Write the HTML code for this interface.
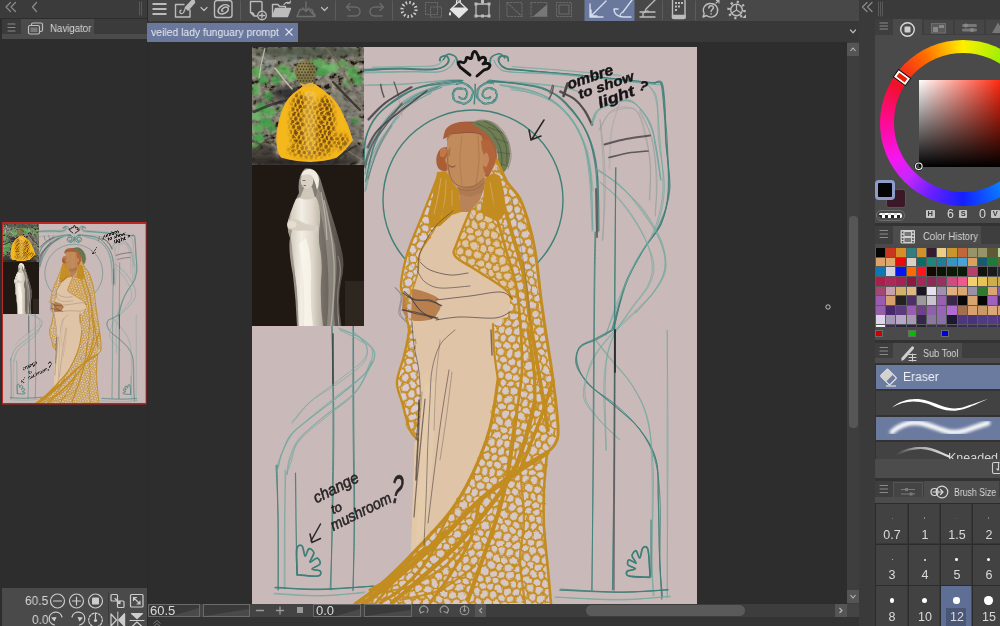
<!DOCTYPE html>
<html><head><meta charset="utf-8">
<style>
*{box-sizing:border-box;margin:0;padding:0}
html,body{width:1000px;height:626px;overflow:hidden;background:#2d2d2d;font-family:"Liberation Sans",sans-serif;color:#ddd}
.a{position:absolute}
svg{position:absolute;left:0;top:0;overflow:hidden}
.t{position:absolute;white-space:nowrap;color:#d6d6d6;transform-origin:0 50%;will-change:transform}
</style></head><body>
<!-- ===== base regions ===== -->
<div class="a" style="left:0;top:0;width:147px;height:626px;background:#2d2d2d"></div>
<div class="a" style="left:0;top:0;width:147px;height:18px;background:#3b3b3b"></div>
<div class="a" style="left:2px;top:19px;width:145px;height:20px;background:#3b3b3b"></div>
<div class="a" style="left:21px;top:19px;width:73px;height:16px;background:#4b4b4b"></div>
<div class="a" style="left:2px;top:34px;width:145px;height:5px;background:#4b4b4b"></div>
<div class="t" style="left:49.5px;top:22px;font-size:10.5px;line-height:13px;transform:scaleX(.92)">Navigator</div>
<div class="a" style="left:147px;top:0;width:1px;height:626px;background:#2a2a2a"></div>
<!-- left bottom controls -->
<div class="a" style="left:2px;top:588px;width:145px;height:38px;background:#4a4a4a"></div>
<div class="t" style="left:25px;top:594px;font-size:12.5px;line-height:15px;transform:scaleX(.95)">60.5</div>
<div class="t" style="left:32px;top:613px;font-size:12.5px;line-height:15px;transform:scaleX(.95)">0.0</div>

<!-- ===== top toolbar ===== -->
<div class="a" style="left:148px;top:0;width:711px;height:21px;background:#484848"></div>
<div class="a" style="left:148px;top:21px;width:711px;height:21px;background:#383838"></div>
<div class="a" style="left:147px;top:23px;width:151px;height:19px;background:#69789c"></div>
<div class="t" style="left:151px;top:26px;font-size:11.5px;line-height:13px;color:#e8ebf2;transform:scaleX(.905)">veiled lady funguary prompt</div>

<!-- ===== canvas art ===== -->
<svg width="1000" height="626" viewBox="0 0 1000 626" style="will-change:transform">
<defs><clipPath id="cv"><rect x="252" y="47" width="445" height="557"/></clipPath></defs>
<g id="art" clip-path="url(#cv)">
<rect x="252" y="47" width="445" height="557" fill="#c9b9b8"/>
<g fill="none" stroke-linecap="round" stroke-linejoin="round">
<path d="M364.0 70.0C370.0 69.8 389.3 69.0 400.0 69.0C410.7 69.0 421.2 70.2 428.0 70.0C434.8 69.8 437.5 69.3 441.0 68.0C444.5 66.7 448.0 64.0 449.0 62.0C450.0 60.0 448.3 56.8 447.0 56.0C445.7 55.2 442.2 56.2 441.0 57.0C439.8 57.8 440.2 60.3 440.0 61.0" stroke="#3d7f78" stroke-width="1.1" opacity="0.9" /><path d="M363.6 69.3C369.8 69.1 389.6 68.1 400.3 68.1C411.0 68.2 421.4 69.8 428.1 69.7C434.7 69.7 436.8 69.3 440.1 68.0C443.4 66.7 447.1 64.0 448.1 61.9C449.1 59.7 447.3 55.9 446.1 55.2C444.9 54.5 442.0 56.8 440.8 57.7C439.7 58.5 439.5 60.0 439.2 60.4" stroke="#3d7f78" stroke-width="1.1" opacity="0.9" /><path d="M364.3 70.9C370.2 70.5 389.4 69.1 400.2 68.8C410.9 68.5 422.0 69.3 429.0 69.1C435.9 68.9 438.5 68.9 441.7 67.6C444.9 66.3 447.5 63.1 448.3 61.2C449.1 59.4 447.9 57.3 446.6 56.6C445.3 56.0 441.4 56.5 440.4 57.2C439.3 57.8 440.3 60.1 440.3 60.7" stroke="#3d7f78" stroke-width="1.1" opacity="0.9" />
<path d="M364.0 73.0C371.7 72.8 397.7 72.2 410.0 72.0C422.3 71.8 431.3 72.8 438.0 72.0C444.7 71.2 447.2 69.0 450.0 67.0C452.8 65.0 454.2 61.2 455.0 60.0" stroke="#6fa8a0" stroke-width="1" opacity="0.8" /><path d="M364.1 72.1C371.6 72.0 396.7 71.5 409.1 71.4C421.5 71.4 431.6 72.6 438.4 71.9C445.1 71.1 446.9 69.2 449.6 67.2C452.4 65.1 454.0 60.9 454.9 59.6" stroke="#6fa8a0" stroke-width="1" opacity="0.8" />
<path d="M372.0 67.0C378.3 66.9 399.3 66.8 410.0 66.5C420.7 66.2 430.3 66.4 436.0 65.0C441.7 63.6 442.7 59.2 444.0 58.0" stroke="#6fa8a0" stroke-width="0.9" opacity="0.6" /><path d="M372.6 67.4C378.7 67.3 398.9 66.9 409.5 66.6C420.1 66.4 430.2 67.3 436.1 65.8C441.9 64.2 443.1 58.9 444.5 57.6" stroke="#6fa8a0" stroke-width="0.9" opacity="0.6" />
<path d="M443.0 60.0C443.8 59.0 445.8 54.5 448.0 54.0C450.2 53.5 454.3 55.3 456.0 57.0C457.7 58.7 457.7 62.8 458.0 64.0" stroke="#3d7f78" stroke-width="1.2" opacity="0.85" /><path d="M443.8 59.4C444.5 58.6 445.9 54.8 447.9 54.4C449.8 54.0 453.9 55.3 455.4 57.0C457.0 58.6 457.0 63.1 457.3 64.3" stroke="#3d7f78" stroke-width="1.2" opacity="0.85" />
<path d="M508.0 61.0C507.8 60.3 508.2 57.8 507.0 57.0C505.8 56.2 502.3 55.2 501.0 56.0C499.7 56.8 498.2 60.0 499.0 62.0C499.8 64.0 502.5 66.7 506.0 68.0C509.5 69.3 507.7 68.8 520.0 70.0C532.3 71.2 557.5 72.8 580.0 75.0C602.5 77.2 642.5 81.7 655.0 83.0" stroke="#3d7f78" stroke-width="1.1" opacity="0.9" /><path d="M508.5 61.1C508.4 60.4 508.9 57.5 507.8 56.6C506.6 55.8 502.8 55.3 501.4 56.2C500.0 57.1 498.3 59.8 499.2 61.9C500.0 64.0 503.2 67.5 506.7 68.9C510.1 70.3 507.9 69.2 519.9 70.3C532.0 71.4 556.6 73.1 579.1 75.4C601.7 77.7 642.6 82.6 655.3 84.0" stroke="#3d7f78" stroke-width="1.1" opacity="0.9" /><path d="M508.6 60.6C508.3 60.0 508.2 58.1 506.8 57.3C505.3 56.6 501.5 55.3 500.0 55.9C498.6 56.6 497.5 59.1 498.3 61.2C499.2 63.3 501.6 67.2 505.1 68.5C508.6 69.9 506.8 68.3 519.3 69.5C531.7 70.7 557.3 73.5 579.8 75.7C602.3 78.0 641.8 81.7 654.2 82.9" stroke="#3d7f78" stroke-width="1.1" opacity="0.9" />
<path d="M494.0 60.0C494.7 61.2 495.3 65.0 498.0 67.0C500.7 69.0 499.7 70.8 510.0 72.0C520.3 73.2 538.3 72.2 560.0 74.0C581.7 75.8 623.3 81.2 640.0 83.0C656.7 84.8 656.7 84.7 660.0 85.0" stroke="#6fa8a0" stroke-width="1" opacity="0.8" /><path d="M494.1 60.8C494.9 61.9 496.1 65.9 498.6 67.7C501.2 69.6 499.4 70.7 509.6 71.8C519.7 73.0 537.8 73.0 559.7 74.8C581.6 76.5 624.3 80.7 640.9 82.3C657.5 83.9 656.3 84.1 659.4 84.5" stroke="#6fa8a0" stroke-width="1" opacity="0.8" />
<path d="M505.0 58.0C504.2 57.3 502.2 54.2 500.0 54.0C497.8 53.8 493.7 55.3 492.0 57.0C490.3 58.7 490.3 62.8 490.0 64.0" stroke="#3d7f78" stroke-width="1.2" opacity="0.85" /><path d="M504.6 58.0C503.8 57.3 502.4 53.8 500.1 53.6C497.9 53.4 492.9 55.1 491.2 56.9C489.5 58.6 490.0 62.9 489.8 64.1" stroke="#3d7f78" stroke-width="1.2" opacity="0.85" />
<path d="M512.0 66.5C520.0 67.1 542.0 68.4 560.0 70.0C578.0 71.6 610.0 75.0 620.0 76.0" stroke="#6fa8a0" stroke-width="0.9" opacity="0.6" /><path d="M512.9 66.9C520.8 67.4 542.1 68.9 560.0 70.2C577.9 71.6 610.3 74.3 620.4 75.1" stroke="#6fa8a0" stroke-width="0.9" opacity="0.6" />
<path d="M364.0 85.0C370.0 84.8 389.0 84.5 400.0 84.0C411.0 83.5 421.8 82.7 430.0 82.0C438.2 81.3 443.7 80.2 449.0 80.0C454.3 79.8 459.8 80.8 462.0 81.0" stroke="#6fa8a0" stroke-width="1" opacity="0.7" /><path d="M364.8 85.6C370.8 85.4 389.9 85.2 400.7 84.6C411.6 84.0 421.9 82.5 429.8 81.8C437.7 81.1 443.0 80.5 448.2 80.3C453.4 80.0 459.0 80.2 461.1 80.1" stroke="#6fa8a0" stroke-width="1" opacity="0.7" />
<path d="M488.0 81.0C493.3 81.3 508.0 82.0 520.0 83.0C532.0 84.0 550.0 85.5 560.0 87.0C570.0 88.5 576.7 91.2 580.0 92.0" stroke="#6fa8a0" stroke-width="1" opacity="0.7" /><path d="M487.4 80.3C492.8 80.6 507.7 81.1 519.7 82.1C531.6 83.1 549.1 84.7 559.0 86.3C568.9 87.9 575.8 90.8 579.2 91.7" stroke="#6fa8a0" stroke-width="1" opacity="0.7" />
<path d="M456.7 83.6C457.5 83.5 459.8 83.0 461.3 83.1C462.7 83.1 464.3 83.5 465.6 84.0C466.9 84.5 468.2 85.3 469.2 86.2C470.3 87.0 471.1 88.1 471.7 89.3C472.3 90.4 472.7 91.7 472.8 92.9C472.9 94.1 472.8 95.3 472.4 96.5C472.1 97.6 471.5 98.7 470.7 99.6C470.0 100.6 469.0 101.4 467.9 102.0C466.9 102.6 465.7 103.0 464.5 103.3C463.4 103.5 462.1 103.5 460.9 103.4C459.8 103.2 458.6 102.9 457.6 102.4C456.7 101.9 455.7 101.2 455.0 100.5C454.3 99.7 453.8 98.8 453.4 98.0C453.0 97.1 452.9 96.1 452.9 95.2C452.9 94.2 453.1 93.3 453.5 92.5C453.8 91.7 454.4 90.9 455.0 90.2C455.6 89.6 456.4 89.1 457.2 88.7C458.1 88.3 459.0 88.1 459.8 88.0C460.7 87.9 461.6 88.0 462.4 88.2C463.2 88.3 464.0 88.7 464.7 89.1C465.3 89.5 465.9 90.1 466.4 90.6C466.8 91.2 467.1 91.9 467.3 92.5C467.4 93.1 467.5 93.8 467.4 94.5C467.3 95.1 467.0 95.7 466.7 96.2C466.4 96.7 466.0 97.2 465.5 97.6C465.0 97.9 464.4 98.2 463.9 98.4C463.3 98.6 462.7 98.6 462.2 98.6C461.6 98.6 461.1 98.5 460.6 98.3C460.1 98.1 459.6 97.7 459.4 97.5" stroke="#3d7f78" stroke-width="1.3" opacity="0.95" /><path d="M455.9 84.3C456.8 84.0 459.9 82.5 461.5 82.4C463.0 82.4 463.9 83.2 465.2 83.7C466.4 84.2 467.8 84.4 469.0 85.5C470.2 86.6 471.7 88.9 472.3 90.1C473.0 91.4 472.9 91.9 472.7 92.8C472.6 93.8 472.1 94.7 471.7 95.7C471.3 96.8 470.9 98.3 470.4 99.2C469.9 100.1 469.7 100.6 468.5 101.4C467.4 102.2 464.9 103.9 463.7 104.1C462.4 104.3 462.0 103.2 461.0 102.8C460.0 102.3 458.7 101.8 457.7 101.5C456.7 101.3 455.7 101.9 455.1 101.3C454.5 100.8 454.5 99.4 454.1 98.3C453.6 97.2 452.6 95.8 452.4 94.9C452.2 94.0 452.4 93.7 452.9 93.0C453.3 92.3 454.4 91.5 455.1 90.7C455.7 89.9 456.1 88.5 456.9 88.2C457.8 87.9 459.4 88.8 460.4 88.9C461.4 89.0 462.3 88.6 463.1 88.7C463.9 88.8 464.8 89.2 465.3 89.5C465.7 89.9 465.6 90.3 465.9 90.7C466.2 91.0 466.9 91.1 467.0 91.7C467.1 92.2 466.6 93.2 466.5 94.1C466.4 94.9 466.3 96.0 466.3 96.6C466.3 97.1 466.6 97.0 466.3 97.5C466.0 97.9 465.2 99.1 464.7 99.3C464.1 99.4 463.8 98.6 463.0 98.4C462.2 98.1 460.8 98.0 460.1 97.8C459.4 97.6 459.0 97.1 458.8 97.0" stroke="#3d7f78" stroke-width="1.3" opacity="0.95" /><path d="M456.9 84.3C457.8 84.1 460.4 83.0 461.9 83.0C463.4 83.1 464.8 84.0 465.9 84.5C467.0 85.1 467.4 85.6 468.5 86.4C469.6 87.3 471.7 88.7 472.5 89.8C473.2 90.8 473.4 91.6 473.3 92.8C473.1 94.0 472.3 95.8 471.8 97.0C471.4 98.2 470.9 99.4 470.4 100.2C469.9 101.0 469.8 101.1 468.8 101.8C467.8 102.4 465.6 103.9 464.4 104.1C463.1 104.2 462.6 103.2 461.3 102.8C460.1 102.4 457.9 102.1 457.0 101.8C456.0 101.5 456.5 101.6 455.8 101.0C455.1 100.5 453.1 99.5 452.8 98.5C452.4 97.6 453.7 96.4 453.7 95.4C453.8 94.4 453.1 93.6 453.2 92.6C453.3 91.5 453.5 90.0 454.3 89.4C455.2 88.8 457.2 89.1 458.1 89.0C459.0 88.9 459.2 88.8 459.9 88.8C460.6 88.8 461.4 88.9 462.3 88.8C463.2 88.8 464.7 88.3 465.3 88.6C465.9 88.8 465.7 89.6 465.9 90.3C466.2 90.9 466.6 92.0 466.8 92.7C467.0 93.3 467.1 93.6 466.9 94.3C466.8 95.0 466.3 96.4 466.1 96.9C465.8 97.5 465.6 97.1 465.2 97.5C464.9 97.8 464.6 98.8 464.0 99.1C463.5 99.4 462.6 99.5 462.0 99.4C461.5 99.2 461.1 98.8 460.6 98.4C460.2 97.9 459.6 97.0 459.4 96.7" stroke="#3d7f78" stroke-width="1.3" opacity="0.95" />
<path d="M456.7 83.6C457.5 83.5 459.8 83.0 461.3 83.1C462.7 83.1 464.3 83.5 465.6 84.0C466.9 84.5 468.2 85.3 469.2 86.2C470.3 87.0 471.1 88.1 471.7 89.3C472.3 90.4 472.7 91.7 472.8 92.9C472.9 94.1 472.8 95.3 472.4 96.5C472.1 97.6 471.5 98.7 470.7 99.6C470.0 100.6 469.0 101.4 467.9 102.0C466.9 102.6 465.7 103.0 464.5 103.3C463.4 103.5 462.1 103.5 460.9 103.4C459.8 103.2 458.6 102.9 457.6 102.4C456.7 101.9 455.7 101.2 455.0 100.5C454.3 99.7 453.8 98.8 453.4 98.0C453.0 97.1 452.9 96.1 452.9 95.2C452.9 94.2 453.1 93.3 453.5 92.5C453.8 91.7 454.4 90.9 455.0 90.2C455.6 89.6 456.4 89.1 457.2 88.7C458.1 88.3 459.0 88.1 459.8 88.0C460.7 87.9 461.6 88.0 462.4 88.2C463.2 88.3 464.0 88.7 464.7 89.1C465.3 89.5 465.9 90.1 466.4 90.6C466.8 91.2 467.1 91.9 467.3 92.5C467.4 93.1 467.5 93.8 467.4 94.5C467.3 95.1 467.0 95.7 466.7 96.2C466.4 96.7 466.0 97.2 465.5 97.6C465.0 97.9 464.4 98.2 463.9 98.4C463.3 98.6 462.7 98.6 462.2 98.6C461.6 98.6 461.1 98.5 460.6 98.3C460.1 98.1 459.6 97.7 459.4 97.5" stroke="#6fa8a0" stroke-width="1" opacity="0.7" /><path d="M456.6 82.9C457.2 83.0 458.7 83.6 460.1 83.8C461.4 84.0 463.2 83.5 464.8 83.9C466.4 84.3 468.7 85.4 469.8 86.3C470.9 87.2 470.8 88.1 471.3 89.3C471.8 90.5 472.9 92.3 472.9 93.5C473.0 94.8 471.9 95.7 471.5 96.6C471.0 97.5 470.6 98.2 470.1 99.1C469.6 100.0 469.5 101.2 468.6 102.0C467.7 102.8 465.8 103.7 464.7 103.9C463.6 104.1 463.1 103.5 461.9 103.3C460.8 103.0 459.1 102.8 457.9 102.4C456.8 102.0 455.8 101.7 455.1 100.9C454.3 100.2 453.7 98.8 453.3 98.0C452.9 97.2 452.7 97.0 452.8 96.2C452.9 95.4 453.4 94.5 453.9 93.4C454.5 92.3 455.5 90.3 456.1 89.7C456.6 89.1 456.6 90.2 457.4 89.8C458.2 89.3 460.0 87.4 460.7 87.1C461.3 86.8 461.0 87.8 461.5 88.0C462.0 88.2 463.0 88.0 463.7 88.5C464.3 89.0 464.6 90.2 465.3 91.0C466.0 91.9 467.7 92.8 467.9 93.5C468.1 94.1 466.7 94.7 466.5 95.0C466.4 95.3 467.1 94.7 467.1 95.4C467.1 96.0 467.1 98.0 466.4 98.7C465.8 99.4 464.0 99.5 463.2 99.5C462.5 99.4 462.2 98.6 461.9 98.6C461.7 98.5 462.4 99.3 461.8 99.1C461.2 98.9 459.1 97.7 458.5 97.4" stroke="#6fa8a0" stroke-width="1" opacity="0.7" />
<path d="M493.3 83.6C492.5 83.5 490.2 83.0 488.7 83.1C487.3 83.1 485.7 83.5 484.4 84.0C483.1 84.5 481.8 85.3 480.8 86.2C479.7 87.0 478.9 88.1 478.3 89.3C477.7 90.4 477.3 91.7 477.2 92.9C477.1 94.1 477.2 95.3 477.6 96.5C477.9 97.6 478.5 98.7 479.3 99.6C480.0 100.6 481.0 101.4 482.1 102.0C483.1 102.6 484.3 103.0 485.5 103.3C486.6 103.5 487.9 103.5 489.1 103.4C490.2 103.2 491.4 102.9 492.4 102.4C493.3 101.9 494.3 101.2 495.0 100.5C495.7 99.7 496.2 98.8 496.6 98.0C497.0 97.1 497.1 96.1 497.1 95.2C497.1 94.2 496.9 93.3 496.5 92.5C496.2 91.7 495.6 90.9 495.0 90.2C494.4 89.6 493.6 89.1 492.8 88.7C491.9 88.3 491.0 88.1 490.2 88.0C489.3 87.9 488.4 88.0 487.6 88.2C486.8 88.3 486.0 88.7 485.3 89.1C484.7 89.5 484.1 90.1 483.6 90.6C483.2 91.2 482.9 91.9 482.7 92.5C482.6 93.1 482.5 93.8 482.6 94.5C482.7 95.1 483.0 95.7 483.3 96.2C483.6 96.7 484.0 97.2 484.5 97.6C485.0 97.9 485.6 98.2 486.1 98.4C486.7 98.6 487.3 98.6 487.8 98.6C488.4 98.6 488.9 98.5 489.4 98.3C489.9 98.1 490.4 97.7 490.6 97.5" stroke="#3d7f78" stroke-width="1.3" opacity="0.95" /><path d="M493.3 83.3C492.5 83.2 489.6 82.8 488.2 82.8C486.8 82.7 486.0 82.6 484.8 83.1C483.6 83.7 482.1 85.1 480.9 86.1C479.6 87.0 478.0 87.8 477.4 89.0C476.8 90.1 477.5 91.5 477.4 92.9C477.3 94.3 476.4 96.1 476.8 97.3C477.2 98.6 479.1 99.8 479.8 100.5C480.6 101.2 480.5 101.0 481.4 101.6C482.2 102.1 483.4 103.6 484.6 103.8C485.9 104.0 487.4 102.8 488.6 102.7C489.9 102.6 491.1 103.6 492.2 103.1C493.4 102.7 494.9 100.8 495.5 100.1C496.2 99.3 495.7 99.5 496.0 98.7C496.3 98.0 497.3 96.7 497.3 95.5C497.2 94.3 496.1 92.6 495.8 91.7C495.5 90.8 496.0 90.5 495.3 90.1C494.7 89.7 492.8 89.7 492.0 89.5C491.2 89.2 491.3 88.7 490.4 88.5C489.5 88.4 487.8 88.6 486.8 88.8C485.8 89.0 485.1 89.5 484.5 89.8C484.0 90.0 483.8 89.8 483.6 90.3C483.3 90.9 483.1 92.7 482.8 93.3C482.6 93.9 482.1 93.4 482.2 93.8C482.3 94.2 483.1 95.2 483.3 95.7C483.6 96.3 483.5 96.6 483.8 97.0C484.1 97.3 484.7 97.6 485.3 97.8C485.9 98.1 486.7 98.2 487.5 98.3C488.2 98.3 489.3 98.1 489.9 97.9C490.4 97.7 490.5 97.1 490.6 97.0" stroke="#3d7f78" stroke-width="1.3" opacity="0.95" /><path d="M493.0 82.8C492.2 82.7 489.7 82.0 488.3 82.2C486.9 82.4 486.2 83.4 484.8 84.1C483.5 84.7 481.2 85.4 480.2 86.1C479.2 86.9 479.5 87.5 479.1 88.6C478.7 89.7 478.0 91.3 477.8 92.7C477.5 94.2 477.3 95.9 477.6 97.1C477.8 98.2 478.3 98.7 479.1 99.6C479.9 100.6 481.4 102.1 482.4 102.9C483.4 103.6 484.0 103.7 485.2 103.9C486.4 104.0 488.3 103.9 489.4 103.6C490.6 103.3 491.4 102.8 492.2 102.1C493.0 101.5 493.6 100.4 494.2 99.8C494.8 99.2 495.4 99.3 495.8 98.4C496.3 97.5 496.7 95.4 496.7 94.6C496.7 93.7 496.0 93.8 495.8 93.1C495.6 92.4 496.2 91.4 495.7 90.5C495.1 89.7 493.3 88.7 492.4 88.2C491.4 87.8 490.7 88.0 489.8 87.9C488.9 87.9 487.8 87.7 486.9 88.1C486.1 88.4 485.3 89.5 484.9 89.9C484.5 90.4 484.9 90.2 484.5 90.7C484.1 91.3 482.6 92.8 482.3 93.3C481.9 93.9 482.3 93.8 482.3 94.2C482.3 94.6 482.0 95.4 482.4 96.0C482.7 96.6 483.9 97.2 484.5 97.6C485.0 98.0 485.2 98.3 485.6 98.4C486.0 98.5 486.4 98.2 486.9 98.2C487.4 98.1 488.2 98.4 488.7 98.1C489.1 97.9 489.6 96.9 489.8 96.7" stroke="#3d7f78" stroke-width="1.3" opacity="0.95" />
<path d="M493.3 83.6C492.5 83.5 490.2 83.0 488.7 83.1C487.3 83.1 485.7 83.5 484.4 84.0C483.1 84.5 481.8 85.3 480.8 86.2C479.7 87.0 478.9 88.1 478.3 89.3C477.7 90.4 477.3 91.7 477.2 92.9C477.1 94.1 477.2 95.3 477.6 96.5C477.9 97.6 478.5 98.7 479.3 99.6C480.0 100.6 481.0 101.4 482.1 102.0C483.1 102.6 484.3 103.0 485.5 103.3C486.6 103.5 487.9 103.5 489.1 103.4C490.2 103.2 491.4 102.9 492.4 102.4C493.3 101.9 494.3 101.2 495.0 100.5C495.7 99.7 496.2 98.8 496.6 98.0C497.0 97.1 497.1 96.1 497.1 95.2C497.1 94.2 496.9 93.3 496.5 92.5C496.2 91.7 495.6 90.9 495.0 90.2C494.4 89.6 493.6 89.1 492.8 88.7C491.9 88.3 491.0 88.1 490.2 88.0C489.3 87.9 488.4 88.0 487.6 88.2C486.8 88.3 486.0 88.7 485.3 89.1C484.7 89.5 484.1 90.1 483.6 90.6C483.2 91.2 482.9 91.9 482.7 92.5C482.6 93.1 482.5 93.8 482.6 94.5C482.7 95.1 483.0 95.7 483.3 96.2C483.6 96.7 484.0 97.2 484.5 97.6C485.0 97.9 485.6 98.2 486.1 98.4C486.7 98.6 487.3 98.6 487.8 98.6C488.4 98.6 488.9 98.5 489.4 98.3C489.9 98.1 490.4 97.7 490.6 97.5" stroke="#6fa8a0" stroke-width="1" opacity="0.7" /><path d="M492.8 83.0C492.2 83.0 490.3 82.9 489.0 83.2C487.6 83.4 486.3 83.7 485.0 84.4C483.7 85.0 482.4 86.3 481.3 87.1C480.1 87.8 478.5 88.0 478.0 88.8C477.5 89.7 478.3 90.7 478.4 92.0C478.4 93.3 478.1 95.4 478.1 96.8C478.1 98.2 477.4 99.5 478.2 100.4C479.0 101.4 481.7 101.7 483.0 102.3C484.3 102.9 485.2 103.8 486.0 104.0C486.9 104.2 487.1 103.6 488.2 103.4C489.2 103.3 491.1 103.6 492.4 103.2C493.6 102.8 495.0 102.0 495.7 101.3C496.4 100.6 496.5 99.8 496.8 98.9C497.1 98.0 497.7 96.9 497.6 95.6C497.4 94.4 496.5 92.3 495.9 91.3C495.3 90.4 494.8 90.2 494.1 89.9C493.4 89.6 492.4 89.8 491.8 89.5C491.2 89.2 491.0 88.5 490.3 88.3C489.6 88.2 488.7 88.7 487.9 88.6C487.0 88.5 485.9 87.5 485.3 87.9C484.7 88.4 484.8 90.5 484.4 91.2C483.9 92.0 483.0 92.2 482.7 92.6C482.5 93.0 482.8 92.9 483.0 93.4C483.2 93.9 483.8 95.0 483.9 95.6C483.9 96.2 483.0 96.7 483.5 97.0C484.0 97.3 485.8 97.2 486.7 97.7C487.5 98.1 487.9 99.7 488.4 99.8C488.8 99.8 489.0 98.3 489.4 98.0C489.7 97.7 490.4 98.0 490.6 98.0" stroke="#6fa8a0" stroke-width="1" opacity="0.7" />
<path d="M475.0 84.0C475.0 85.3 475.1 88.7 475.0 92.0C474.9 95.3 474.6 102.0 474.5 104.0" stroke="#3d7f78" stroke-width="1.1" opacity="0.8" /><path d="M475.4 84.2C475.3 85.4 475.4 88.2 475.2 91.4C475.0 94.7 474.2 101.6 474.0 103.7" stroke="#3d7f78" stroke-width="1.1" opacity="0.8" />
<path d="M462.0 81.0C459.8 81.2 455.7 81.0 449.0 82.0C442.3 83.0 430.2 84.7 422.0 87.0C413.8 89.3 407.5 91.2 400.0 96.0C392.5 100.8 382.7 109.0 377.0 116.0C371.3 123.0 368.2 129.5 366.0 138.0C363.8 146.5 364.3 162.2 364.0 167.0" stroke="#3d7f78" stroke-width="1.1" opacity="0.85" /><path d="M462.6 80.5C460.4 80.5 456.1 79.7 449.2 80.7C442.2 81.7 429.0 83.8 420.9 86.4C412.7 89.0 407.7 91.7 400.4 96.5C393.2 101.3 383.2 108.6 377.5 115.5C371.7 122.4 368.3 129.5 366.0 137.9C363.8 146.3 364.3 161.3 363.9 166.0" stroke="#3d7f78" stroke-width="1.1" opacity="0.85" /><path d="M463.0 80.2C460.9 80.7 457.3 82.0 450.2 83.1C443.2 84.2 429.0 84.5 420.7 86.9C412.5 89.2 408.1 92.5 400.8 97.2C393.5 102.0 382.8 108.4 376.9 115.4C370.9 122.4 367.5 130.5 365.2 139.2C363.0 147.8 363.6 162.5 363.2 167.2" stroke="#3d7f78" stroke-width="1.1" opacity="0.85" />
<path d="M455.0 84.0C450.8 84.8 438.5 86.0 430.0 89.0C421.5 92.0 412.0 96.2 404.0 102.0C396.0 107.8 387.8 116.0 382.0 124.0C376.2 132.0 371.8 141.5 369.0 150.0C366.2 158.5 365.7 170.8 365.0 175.0" stroke="#6fa8a0" stroke-width="1" opacity="0.8" /><path d="M453.9 84.1C450.2 84.7 439.5 84.9 431.4 87.9C423.2 90.9 413.0 95.9 405.0 102.0C396.9 108.1 389.3 116.4 383.2 124.6C377.0 132.8 371.2 143.0 368.2 151.2C365.2 159.4 365.5 169.8 365.0 173.6" stroke="#6fa8a0" stroke-width="1" opacity="0.8" /><path d="M453.5 84.0C449.6 84.7 438.3 85.5 429.9 88.4C421.4 91.3 411.0 95.4 402.9 101.5C394.9 107.6 387.4 116.8 381.4 125.0C375.5 133.2 370.1 142.6 367.5 150.8C364.9 158.9 366.3 170.0 366.0 173.9" stroke="#6fa8a0" stroke-width="1" opacity="0.8" />
<path d="M398.0 116.0C395.0 120.0 385.0 131.8 380.0 140.0C375.0 148.2 370.0 160.8 368.0 165.0" stroke="#6fa8a0" stroke-width="1" opacity="0.7" /><path d="M399.3 116.6C396.3 120.4 386.5 131.4 381.2 139.4C375.9 147.4 369.9 160.5 367.6 164.7" stroke="#6fa8a0" stroke-width="1" opacity="0.7" />
<path d="M411.0 87.0C406.8 89.6 393.1 97.0 386.0 102.5C378.9 108.0 371.4 117.1 368.5 120.0" stroke="#4b4649" stroke-width="1.6" opacity="0.8" /><path d="M412.0 87.2C407.6 89.7 393.0 97.0 385.7 102.4C378.4 107.7 371.0 116.3 368.1 119.1" stroke="#4b4649" stroke-width="1.6" opacity="0.8" />
<path d="M440.0 86.0C435.3 88.0 420.3 92.7 412.0 98.0C403.7 103.3 396.3 110.0 390.0 118.0C383.7 126.0 378.0 135.7 374.0 146.0C370.0 156.3 367.3 174.3 366.0 180.0" stroke="#3d7f78" stroke-width="1" opacity="0.7" /><path d="M438.2 87.5C433.7 89.5 419.3 95.0 411.1 99.9C402.8 104.8 395.1 109.5 388.9 117.0C382.7 124.4 378.0 133.8 374.0 144.6C370.1 155.5 366.9 175.8 365.4 182.0" stroke="#3d7f78" stroke-width="1" opacity="0.7" /><path d="M441.7 87.4C436.8 89.4 420.9 94.7 412.6 99.8C404.3 105.0 398.2 110.9 391.9 118.2C385.7 125.6 379.1 133.8 375.0 144.0C370.8 154.3 368.3 173.8 367.0 179.8" stroke="#3d7f78" stroke-width="1" opacity="0.7" />
<path d="M430.0 93.0C425.7 95.8 411.7 102.8 404.0 110.0C396.3 117.2 389.3 126.7 384.0 136.0C378.7 145.3 375.0 157.0 372.0 166.0C369.0 175.0 367.0 186.0 366.0 190.0" stroke="#6fa8a0" stroke-width="1" opacity="0.7" /><path d="M431.1 93.6C426.4 96.0 410.6 101.2 403.1 108.0C395.5 114.8 391.1 124.8 385.9 134.4C380.7 143.9 375.3 155.9 371.9 165.3C368.4 174.8 366.2 186.8 365.1 191.1" stroke="#6fa8a0" stroke-width="1" opacity="0.7" /><path d="M432.1 91.9C427.5 94.8 412.7 101.9 404.7 109.1C396.7 116.4 389.9 126.3 384.3 135.5C378.6 144.8 373.8 155.1 370.5 164.5C367.3 173.9 365.7 187.2 364.7 191.8" stroke="#6fa8a0" stroke-width="1" opacity="0.7" />
<path d="M402.0 104.0C399.0 107.3 389.0 117.0 384.0 124.0C379.0 131.0 375.2 138.7 372.0 146.0C368.8 153.3 366.2 164.3 365.0 168.0" stroke="#4b4649" stroke-width="1.3" opacity="0.6" /><path d="M402.0 103.0C399.2 106.8 390.5 118.8 385.5 125.8C380.4 132.7 375.4 137.9 371.8 144.7C368.2 151.5 365.2 162.9 363.9 166.5" stroke="#4b4649" stroke-width="1.3" opacity="0.6" />
<path d="M392.0 126.0C389.7 130.0 382.0 141.3 378.0 150.0C374.0 158.7 369.7 173.3 368.0 178.0" stroke="#6a6a70" stroke-width="1" opacity="0.5" /><path d="M391.5 124.8C389.1 128.9 381.1 140.2 377.2 149.3C373.3 158.3 369.7 174.2 368.2 179.2" stroke="#6a6a70" stroke-width="1" opacity="0.5" />
<path d="M426.5 91.0C421.7 94.8 405.8 106.8 397.5 113.5C389.2 120.2 381.9 125.8 377.0 131.5C372.1 137.2 369.5 145.2 368.0 148.0" stroke="#4b4649" stroke-width="1.4" opacity="0.75" /><path d="M427.1 90.8C422.1 94.6 405.7 106.8 397.3 113.6C388.9 120.3 381.8 125.5 376.7 131.1C371.6 136.8 368.6 144.7 366.9 147.5" stroke="#4b4649" stroke-width="1.4" opacity="0.75" />
<path d="M380.7 84.5C380.9 85.6 381.4 88.9 382.0 91.0C382.6 93.1 383.7 96.0 384.0 97.0" stroke="#4b4649" stroke-width="1.5" opacity="0.85" />
<path d="M394.0 82.0C394.4 83.2 395.8 86.7 396.5 89.0C397.2 91.3 398.2 94.8 398.5 96.0" stroke="#4b4649" stroke-width="1.3" opacity="0.8" />
<path d="M398.5 96.0C398.8 97.7 399.4 102.7 400.0 106.0C400.6 109.3 401.7 114.3 402.0 116.0" stroke="#8a8a8a" stroke-width="0.8" opacity="0.5" />
<path d="M488.0 81.0C493.3 81.5 510.5 82.5 520.0 84.0C529.5 85.5 537.3 86.8 545.0 90.0C552.7 93.2 559.0 95.8 566.0 103.0C573.0 110.2 582.0 121.5 587.0 133.0C592.0 144.5 594.2 155.5 596.0 172.0C597.8 188.5 597.7 222.0 598.0 232.0" stroke="#3d7f78" stroke-width="1.1" opacity="0.85" /><path d="M489.2 80.0C494.3 80.7 510.6 82.8 520.0 84.3C529.5 85.9 538.4 86.3 545.9 89.3C553.5 92.3 558.6 95.1 565.4 102.3C572.2 109.6 581.4 121.1 586.7 132.9C592.0 144.6 595.1 156.6 597.2 172.9C599.2 189.2 598.7 221.1 599.0 230.8" stroke="#3d7f78" stroke-width="1.1" opacity="0.85" /><path d="M486.8 81.5C492.5 81.9 511.3 82.7 521.0 83.9C530.8 85.1 537.8 85.3 545.2 88.7C552.7 92.1 558.6 96.6 565.7 104.1C572.8 111.6 582.6 122.7 587.8 133.9C593.1 145.1 595.7 155.1 597.2 171.3C598.8 187.5 597.0 221.1 597.0 231.1" stroke="#3d7f78" stroke-width="1.1" opacity="0.85" />
<path d="M500.0 85.0C505.8 86.2 525.0 88.5 535.0 92.0C545.0 95.5 552.5 99.2 560.0 106.0C567.5 112.8 575.0 122.3 580.0 133.0C585.0 143.7 587.8 153.8 590.0 170.0C592.2 186.2 592.5 220.0 593.0 230.0" stroke="#6fa8a0" stroke-width="1" opacity="0.75" /><path d="M500.1 85.5C506.1 86.7 526.3 89.1 536.3 92.7C546.4 96.2 553.2 100.0 560.4 106.8C567.7 113.5 575.2 122.5 579.9 133.2C584.6 143.8 586.6 154.5 588.6 170.8C590.7 187.2 591.6 221.2 592.2 231.3" stroke="#6fa8a0" stroke-width="1" opacity="0.75" /><path d="M500.4 84.4C506.0 85.6 523.9 87.6 533.9 91.3C543.9 95.0 552.9 99.9 560.4 106.6C567.9 113.3 573.9 121.1 578.8 131.7C583.8 142.3 587.8 154.0 590.1 170.2C592.4 186.5 592.2 219.4 592.7 229.2" stroke="#6fa8a0" stroke-width="1" opacity="0.75" />
<path d="M560.0 92.0C562.4 93.2 570.5 96.0 574.5 99.0C578.5 102.0 581.1 105.7 584.0 110.0C586.9 114.3 590.4 122.2 591.7 124.7" stroke="#4b4649" stroke-width="1.9" opacity="0.8" /><path d="M560.2 91.2C562.5 92.5 570.1 95.8 574.2 98.9C578.3 102.1 581.7 105.9 584.7 110.2C587.8 114.5 591.1 122.3 592.3 124.7" stroke="#4b4649" stroke-width="1.9" opacity="0.8" />
<path d="M510.0 88.0C515.8 89.7 535.0 93.0 545.0 98.0C555.0 103.0 563.2 109.3 570.0 118.0C576.8 126.7 582.3 138.0 586.0 150.0C589.7 162.0 591.0 183.3 592.0 190.0" stroke="#6fa8a0" stroke-width="1" opacity="0.6" /><path d="M508.8 86.9C515.2 88.9 537.0 94.1 547.0 98.9C557.1 103.7 562.7 107.3 569.2 115.9C575.6 124.5 582.2 138.6 586.0 150.8C589.7 162.9 590.7 182.6 591.6 188.9" stroke="#6fa8a0" stroke-width="1" opacity="0.6" /><path d="M510.7 89.9C516.2 90.9 534.0 91.3 543.8 96.0C553.6 100.6 562.1 108.9 569.3 117.7C576.5 126.4 582.8 136.4 586.8 148.7C590.8 160.9 592.2 184.0 593.3 191.1" stroke="#6fa8a0" stroke-width="1" opacity="0.6" />
<path d="M600.0 120.0C600.5 126.7 602.3 146.7 603.0 160.0C603.7 173.3 604.0 186.7 604.0 200.0C604.0 213.3 603.2 233.3 603.0 240.0" stroke="#8a9a98" stroke-width="0.9" opacity="0.55" /><path d="M600.0 119.1C600.7 125.8 603.6 146.1 604.4 159.4C605.2 172.8 605.3 185.6 605.0 199.2C604.6 212.8 602.6 233.8 602.2 240.8" stroke="#8a9a98" stroke-width="0.9" opacity="0.55" />
<path d="M640.0 110.0C642.0 115.0 649.2 128.3 652.0 140.0C654.8 151.7 656.5 167.5 657.0 180.0C657.5 192.5 655.3 209.2 655.0 215.0" stroke="#8a9a98" stroke-width="0.9" opacity="0.5" /><path d="M639.4 111.4C641.5 116.0 649.2 127.7 652.0 139.1C654.8 150.5 655.6 166.9 656.2 179.8C656.8 192.6 655.6 210.2 655.5 216.3" stroke="#8a9a98" stroke-width="0.9" opacity="0.5" />
<path d="M620.0 104.0C618.7 108.3 613.7 119.0 612.0 130.0C610.3 141.0 610.3 163.3 610.0 170.0" stroke="#9aa5a3" stroke-width="0.8" opacity="0.45" /><path d="M618.9 103.7C617.6 108.3 612.8 120.6 611.1 131.4C609.5 142.3 609.3 162.4 608.9 168.7" stroke="#9aa5a3" stroke-width="0.8" opacity="0.45" />
<path d="M553.5 86.0C553.2 87.2 552.8 90.8 552.0 93.0C551.2 95.2 549.5 98.0 549.0 99.0" stroke="#4b4649" stroke-width="1.4" opacity="0.85" />
<path d="M596.0 189.0C596.1 193.3 596.3 207.0 596.5 215.0C596.7 223.0 596.9 233.3 597.0 237.0" stroke="#4b4649" stroke-width="1.9" opacity="0.75" />
<path d="M655.0 83.0C656.0 83.2 659.5 79.5 661.0 84.0C662.5 88.5 663.2 100.7 664.0 110.0C664.8 119.3 665.2 126.8 666.0 140.0C666.8 153.2 669.8 175.0 669.0 189.0C668.2 203.0 665.3 213.8 661.0 224.0C656.7 234.2 648.8 240.0 643.0 250.0C637.2 260.0 631.0 270.7 626.0 284.0C621.0 297.3 615.2 322.3 613.0 330.0" stroke="#3d7f78" stroke-width="1.1" opacity="0.85" /><path d="M653.9 82.7C655.2 83.1 660.2 80.2 662.0 85.0C663.8 89.8 663.8 102.2 664.6 111.3C665.5 120.4 666.5 126.4 667.1 139.6C667.7 152.7 669.1 176.3 668.2 190.1C667.3 204.0 665.8 212.9 661.6 222.8C657.5 232.7 649.4 239.6 643.4 249.7C637.4 259.8 630.9 270.4 625.7 283.6C620.5 296.7 614.4 321.2 612.1 328.7" stroke="#3d7f78" stroke-width="1.1" opacity="0.85" /><path d="M654.4 82.6C655.7 82.7 660.4 78.6 662.2 83.0C664.0 87.5 664.6 99.6 665.2 109.2C665.8 118.9 664.9 127.6 665.6 140.8C666.4 154.1 670.8 175.0 669.8 188.8C668.9 202.7 664.4 213.6 659.8 223.9C655.3 234.3 648.4 241.1 642.7 251.1C636.9 261.0 630.0 270.7 625.2 283.6C620.4 296.6 615.9 321.3 614.0 328.8" stroke="#3d7f78" stroke-width="1.1" opacity="0.85" />
<path d="M648.0 84.0C649.3 86.7 654.0 90.7 656.0 100.0C658.0 109.3 658.8 125.2 660.0 140.0C661.2 154.8 663.8 174.3 663.0 189.0C662.2 203.7 659.5 215.8 655.0 228.0C650.5 240.2 642.2 250.0 636.0 262.0C629.8 274.0 623.0 287.8 618.0 300.0C613.0 312.2 608.0 329.2 606.0 335.0" stroke="#6fa8a0" stroke-width="1" opacity="0.7" /><path d="M647.7 85.0C649.2 87.3 655.1 89.6 656.9 98.5C658.7 107.5 657.3 123.7 658.5 138.6C659.8 153.5 664.8 173.1 664.3 188.2C663.9 203.3 660.6 217.1 655.8 229.3C651.0 241.5 641.5 249.4 635.5 261.3C629.4 273.1 624.5 288.0 619.5 300.4C614.4 312.8 607.6 329.8 605.2 335.7" stroke="#6fa8a0" stroke-width="1" opacity="0.7" />
<path d="M591.7 125.0C592.8 122.5 594.5 113.7 598.0 110.0C601.5 106.3 608.0 104.5 613.0 103.0C618.0 101.5 623.5 100.2 628.0 101.0C632.5 101.8 636.3 104.0 640.0 108.0C643.7 112.0 647.3 118.7 650.0 125.0C652.7 131.3 654.2 136.8 656.0 146.0C657.8 155.2 660.2 174.3 661.0 180.0" stroke="#6fa8a0" stroke-width="1" opacity="0.8" /><path d="M591.3 124.5C592.2 122.2 593.0 114.1 596.8 110.6C600.6 107.1 608.6 105.1 614.0 103.3C619.4 101.5 624.8 99.1 629.1 99.9C633.3 100.6 635.7 103.6 639.4 107.9C643.0 112.3 648.4 119.8 651.1 126.1C653.8 132.3 654.1 136.4 655.7 145.4C657.4 154.4 660.0 174.2 660.8 180.0" stroke="#6fa8a0" stroke-width="1" opacity="0.8" /><path d="M592.7 124.2C593.7 122.0 595.2 114.0 598.7 110.6C602.2 107.1 608.9 105.3 613.8 103.7C618.7 102.0 624.0 99.9 628.3 100.6C632.6 101.3 635.8 103.8 639.6 107.7C643.3 111.6 648.1 117.5 650.7 124.0C653.3 130.5 653.7 137.4 655.3 146.6C656.9 155.8 659.5 173.6 660.4 179.0" stroke="#6fa8a0" stroke-width="1" opacity="0.8" />
<path d="M600.0 130.0C601.7 127.0 605.8 115.8 610.0 112.0C614.2 108.2 620.3 106.8 625.0 107.0C629.7 107.2 634.5 108.3 638.0 113.0C641.5 117.7 644.0 126.3 646.0 135.0C648.0 143.7 649.3 154.2 650.0 165.0C650.7 175.8 650.0 194.2 650.0 200.0" stroke="#8f9a98" stroke-width="0.8" opacity="0.6" /><path d="M598.6 130.2C600.4 127.4 604.9 117.1 609.5 113.4C614.1 109.8 621.5 108.7 626.2 108.5C630.8 108.2 634.2 107.3 637.3 111.8C640.4 116.2 642.6 126.1 644.8 135.0C647.0 143.8 649.9 154.0 650.6 164.8C651.4 175.6 649.4 193.9 649.2 199.8" stroke="#8f9a98" stroke-width="0.8" opacity="0.6" />
<path d="M604.5 144.5C608.1 143.6 618.4 140.5 626.0 139.0C633.6 137.5 646.0 136.1 650.0 135.5" stroke="#4b4649" stroke-width="2" opacity="0.85" />
<path d="M609.0 157.5C612.2 156.8 621.5 154.1 628.0 153.0C634.5 151.9 644.7 151.3 648.0 151.0" stroke="#4b4649" stroke-width="1.7" opacity="0.85" />
<path d="M596.0 168.0C600.0 171.0 612.2 178.8 620.0 186.0C627.8 193.2 636.3 201.8 643.0 211.0C649.7 220.2 656.3 231.7 660.0 241.0C663.7 250.3 665.8 258.8 665.0 267.0C664.2 275.2 659.8 282.5 655.0 290.0C650.2 297.5 639.2 308.3 636.0 312.0" stroke="#6fa8a0" stroke-width="1" opacity="0.7" /><path d="M596.4 168.6C600.5 171.6 612.9 180.2 620.8 187.1C628.7 194.0 636.8 200.9 643.5 209.8C650.2 218.7 657.5 230.9 661.1 240.3C664.7 249.8 666.1 258.5 665.2 266.6C664.3 274.7 660.8 281.6 655.8 289.0C650.8 296.5 638.6 307.5 635.2 311.2" stroke="#6fa8a0" stroke-width="1" opacity="0.7" /><path d="M594.9 169.2C599.1 171.9 612.3 178.2 620.3 185.4C628.2 192.7 636.0 203.5 642.7 212.6C649.3 221.7 656.1 231.0 660.0 240.1C663.9 249.3 666.6 259.4 666.0 267.5C665.4 275.6 661.6 281.1 656.6 288.7C651.6 296.3 639.4 309.0 635.9 313.0" stroke="#6fa8a0" stroke-width="1" opacity="0.7" />
<path d="M600.0 182.0C603.7 185.3 615.0 193.7 622.0 202.0C629.0 210.3 637.0 222.0 642.0 232.0C647.0 242.0 651.0 253.2 652.0 262.0C653.0 270.8 651.7 277.0 648.0 285.0C644.3 293.0 636.0 300.8 630.0 310.0C624.0 319.2 616.3 328.3 612.0 340.0C607.7 351.7 605.0 361.7 604.0 380.0C603.0 398.3 605.7 438.3 606.0 450.0" stroke="#6fa8a0" stroke-width="1" opacity="0.65" /><path d="M601.1 183.3C604.3 186.3 613.9 193.4 620.5 201.3C627.1 209.3 635.3 220.9 640.8 231.0C646.3 241.2 652.1 253.3 653.5 262.3C654.9 271.2 653.1 276.7 649.4 284.6C645.7 292.5 637.5 300.5 631.2 309.8C624.8 319.2 615.5 329.4 611.2 340.9C606.9 352.4 606.2 360.5 605.4 378.7C604.6 397.0 606.2 438.4 606.3 450.4" stroke="#6fa8a0" stroke-width="1" opacity="0.65" />
<path d="M613.0 330.0C610.2 331.7 601.5 337.2 596.0 340.0C590.5 342.8 583.2 342.8 580.0 347.0C576.8 351.2 575.3 358.7 577.0 365.0C578.7 371.3 583.8 378.3 590.0 385.0C596.2 391.7 605.7 397.5 614.0 405.0C622.3 412.5 633.2 420.8 640.0 430.0C646.8 439.2 651.7 448.3 655.0 460.0C658.3 471.7 659.2 483.3 660.0 500.0C660.8 516.7 659.7 543.7 660.0 560.0C660.3 576.3 661.7 591.7 662.0 598.0" stroke="#3d7f78" stroke-width="1" opacity="0.8" /><path d="M612.0 329.5C609.1 331.1 600.2 336.0 594.7 338.9C589.2 341.9 582.0 343.2 579.1 347.4C576.3 351.5 576.0 357.8 577.5 363.9C579.1 370.1 582.1 377.7 588.2 384.4C594.4 391.0 606.1 396.4 614.6 403.9C623.2 411.3 632.4 419.5 639.3 428.9C646.2 438.3 652.9 448.6 656.1 460.2C659.2 471.8 657.8 481.9 658.4 498.6C659.0 515.2 658.9 543.9 659.6 560.2C660.3 576.5 662.0 590.5 662.5 596.5" stroke="#3d7f78" stroke-width="1" opacity="0.8" /><path d="M611.8 330.7C609.1 332.1 601.1 336.2 595.7 339.2C590.3 342.2 582.5 344.3 579.3 348.6C576.1 353.0 574.6 359.2 576.3 365.2C578.0 371.3 583.0 377.8 589.5 384.7C596.0 391.6 607.0 399.4 615.3 406.8C623.6 414.2 632.8 420.2 639.5 428.9C646.3 437.6 652.7 446.8 655.8 458.9C658.9 471.0 657.6 484.4 658.2 501.4C658.9 518.5 659.2 544.8 659.7 561.2C660.3 577.5 661.3 593.0 661.7 599.4" stroke="#3d7f78" stroke-width="1" opacity="0.8" />
<path d="M636.0 312.0C632.0 315.8 619.3 327.0 612.0 335.0C604.7 343.0 596.5 350.0 592.0 360.0C587.5 370.0 584.0 385.3 585.0 395.0C586.0 404.7 592.2 410.5 598.0 418.0C603.8 425.5 616.3 436.3 620.0 440.0" stroke="#6fa8a0" stroke-width="1" opacity="0.65" /><path d="M635.8 310.7C631.5 314.7 617.3 326.7 610.1 335.2C602.8 343.7 597.0 351.6 592.6 361.6C588.1 371.7 582.5 386.1 583.4 395.5C584.2 404.9 591.6 410.7 597.5 418.0C603.4 425.3 615.1 435.6 618.6 439.1" stroke="#6fa8a0" stroke-width="1" opacity="0.65" />
<path d="M596.0 340.0C598.7 343.3 606.0 352.5 612.0 360.0C618.0 367.5 626.0 375.0 632.0 385.0C638.0 395.0 644.7 405.8 648.0 420.0C651.3 434.2 651.3 446.7 652.0 470.0C652.7 493.3 651.8 539.0 652.0 560.0C652.2 581.0 652.8 590.0 653.0 596.0" stroke="#6fa8a0" stroke-width="1" opacity="0.7" /><path d="M596.1 341.3C598.5 344.4 604.7 352.5 610.8 360.0C617.0 367.5 626.9 376.6 632.9 386.4C639.0 396.2 643.7 404.7 647.1 418.9C650.5 433.1 652.5 448.1 653.3 471.4C654.1 494.7 651.8 538.0 651.9 558.7C652.1 579.4 653.9 589.5 654.3 595.7" stroke="#6fa8a0" stroke-width="1" opacity="0.7" />
<path d="M595.0 232.0C594.8 243.3 594.3 263.7 594.0 300.0C593.7 336.3 593.3 401.7 593.0 450.0C592.7 498.3 592.2 566.7 592.0 590.0" stroke="#3d7f78" stroke-width="1" opacity="0.8" /><path d="M595.8 232.2C595.6 243.4 595.0 263.1 594.6 299.3C594.3 335.5 594.0 400.9 593.6 449.4C593.1 498.0 592.1 567.2 591.8 590.7" stroke="#3d7f78" stroke-width="1" opacity="0.8" />
<path d="M615.5 168.0C615.4 190.0 615.2 253.0 615.0 300.0C614.8 347.0 614.3 401.7 614.0 450.0C613.7 498.3 613.2 566.7 613.0 590.0" stroke="#3d7f78" stroke-width="1" opacity="0.85" /><path d="M616.0 167.5C615.8 189.6 614.9 252.8 614.5 299.8C614.2 346.9 614.4 401.5 614.0 449.8C613.7 498.1 612.7 566.3 612.4 589.6" stroke="#3d7f78" stroke-width="1" opacity="0.85" />
<path d="M615.0 330.0L615.0 372.0" stroke="#222" stroke-width="2" opacity="0.85" />
<path d="M615.0 372.0L614.0 590.0" stroke="#4b4649" stroke-width="1.2" opacity="0.7" />
<path d="M667.0 330.0C667.2 348.3 668.0 395.3 668.0 440.0C668.0 484.7 667.2 571.7 667.0 598.0" stroke="#6fa8a0" stroke-width="1" opacity="0.6" /><path d="M667.4 330.8C667.4 349.0 667.1 395.7 667.1 440.1C667.1 484.5 667.4 570.9 667.5 597.1" stroke="#6fa8a0" stroke-width="1" opacity="0.6" />
<path d="M560.0 590.0C570.0 590.3 602.0 592.0 620.0 592.0C638.0 592.0 660.0 590.3 668.0 590.0" stroke="#3d7f78" stroke-width="1" opacity="0.8" /><path d="M560.8 589.1C570.7 589.6 602.3 592.0 620.2 592.1C638.2 592.2 660.3 590.0 668.3 589.5" stroke="#3d7f78" stroke-width="1" opacity="0.8" /><path d="M559.8 590.2C569.8 590.6 601.8 592.4 619.8 592.4C637.8 592.3 659.9 590.3 667.9 589.9" stroke="#3d7f78" stroke-width="1" opacity="0.8" />
<path d="M556.0 597.0C566.7 597.5 601.0 600.2 620.0 600.0C639.0 599.8 661.7 596.7 670.0 596.0" stroke="#6fa8a0" stroke-width="1" opacity="0.7" /><path d="M554.9 597.3C565.7 597.6 600.7 599.5 620.0 599.4C639.3 599.3 662.2 597.1 670.6 596.7" stroke="#6fa8a0" stroke-width="1" opacity="0.7" />
<path d="M650.0 576.0C649.7 571.7 649.2 554.7 648.0 550.0C646.8 545.3 644.3 546.7 643.0 548.0C641.7 549.3 641.2 557.5 640.0 558.0C638.8 558.5 637.3 551.3 636.0 551.0C634.7 550.7 632.0 554.0 632.0 556.0C632.0 558.0 636.5 562.3 636.0 563.0C635.5 563.7 630.3 559.7 629.0 560.0C627.7 560.3 627.0 563.5 628.0 565.0C629.0 566.5 635.2 568.0 635.0 569.0C634.8 570.0 628.0 569.8 627.0 571.0C626.0 572.2 625.2 575.0 629.0 576.0C632.8 577.0 646.5 576.8 650.0 577.0" stroke="#3d7f78" stroke-width="1.4" opacity="0.95" /><path d="M650.0 575.7C649.6 571.3 649.2 554.2 648.0 549.6C646.8 545.0 644.0 546.5 642.6 547.9C641.2 549.3 640.7 557.5 639.6 557.9C638.5 558.4 637.3 550.9 636.0 550.5C634.8 550.1 632.1 553.5 632.1 555.6C632.2 557.7 636.8 562.6 636.2 563.3C635.7 563.9 630.4 559.3 629.0 559.6C627.6 559.8 626.9 563.4 628.0 564.9C629.1 566.4 635.6 567.5 635.5 568.6C635.3 569.7 628.4 570.2 627.4 571.5C626.3 572.8 625.5 575.3 629.2 576.3C633.0 577.3 646.3 577.3 649.7 577.5" stroke="#3d7f78" stroke-width="1.4" opacity="0.95" />
<path d="M651.0 520.0L651.0 577.0" stroke="#3d7f78" stroke-width="1.2" opacity="0.85" />
<path d="M332.0 326.0C332.2 341.7 333.0 387.7 333.0 420.0C333.0 452.3 332.3 491.7 332.0 520.0C331.7 548.3 331.2 578.3 331.0 590.0" stroke="#3d7f78" stroke-width="1" opacity="0.8" /><path d="M332.0 326.9C332.3 342.3 333.7 387.0 333.8 419.3C333.9 451.7 333.2 492.5 332.6 520.9C332.0 549.3 330.5 578.2 330.1 589.7" stroke="#3d7f78" stroke-width="1" opacity="0.8" />
<path d="M353.0 326.0C353.0 341.7 352.8 387.7 353.0 420.0C353.2 452.3 354.0 491.7 354.0 520.0C354.0 548.3 353.2 578.3 353.0 590.0" stroke="#3d7f78" stroke-width="1" opacity="0.8" /><path d="M353.5 325.3C353.6 341.0 353.6 387.2 353.8 419.5C354.0 451.9 354.8 490.7 354.6 519.3C354.5 547.8 353.3 578.9 353.0 590.8" stroke="#3d7f78" stroke-width="1" opacity="0.8" />
<path d="M333.0 334.0L333.0 385.0" stroke="#333" stroke-width="1.6" opacity="0.8" />
<path d="M340.0 329.0C343.3 330.5 354.3 334.2 360.0 338.0C365.7 341.8 373.0 346.3 374.0 352.0C375.0 357.7 372.8 364.2 366.0 372.0C359.2 379.8 343.2 390.7 333.0 399.0C322.8 407.3 312.0 415.8 305.0 422.0C298.0 428.2 295.0 430.5 291.0 436.0C287.0 441.5 283.3 449.7 281.0 455.0C278.7 460.3 277.7 465.8 277.0 468.0" stroke="#6fa8a0" stroke-width="1" opacity="0.75" /><path d="M338.9 328.1C342.5 329.7 354.5 333.6 360.0 337.3C365.6 341.1 371.5 344.8 372.3 350.9C373.1 356.9 371.2 365.3 364.8 373.6C358.3 381.8 343.8 392.2 333.6 400.4C323.5 408.7 311.1 417.1 303.8 423.0C296.5 429.0 293.3 430.9 289.6 436.1C285.9 441.4 283.4 449.1 281.5 454.5C279.6 459.8 278.9 465.9 278.3 468.2" stroke="#6fa8a0" stroke-width="1" opacity="0.75" /><path d="M340.3 330.4C343.3 331.9 352.9 336.2 358.6 339.8C364.3 343.3 373.1 346.4 374.5 351.6C375.9 356.8 373.7 363.2 367.1 371.2C360.5 379.1 345.2 390.6 334.8 399.3C324.3 407.9 311.8 417.0 304.5 423.0C297.2 428.9 294.6 429.8 290.8 434.8C287.0 439.9 284.0 448.0 281.9 453.4C279.8 458.8 278.8 464.8 278.2 467.1" stroke="#6fa8a0" stroke-width="1" opacity="0.75" />
<path d="M352.0 330.0C354.3 332.5 364.0 339.7 366.0 345.0C368.0 350.3 368.3 355.8 364.0 362.0C359.7 368.2 349.0 375.3 340.0 382.0C331.0 388.7 318.0 395.3 310.0 402.0C302.0 408.7 295.0 418.7 292.0 422.0" stroke="#6fa8a0" stroke-width="1" opacity="0.6" /><path d="M352.6 331.9C354.9 334.2 364.6 341.0 366.3 345.7C368.1 350.3 368.0 354.2 363.3 360.0C358.5 365.8 346.9 373.6 338.1 380.6C329.3 387.6 318.1 394.6 310.5 401.7C302.8 408.9 295.1 419.9 292.1 423.6" stroke="#6fa8a0" stroke-width="1" opacity="0.6" />
<path d="M372.0 362.0C369.3 367.0 363.8 382.7 356.0 392.0C348.2 401.3 334.3 410.0 325.0 418.0C315.7 426.0 305.8 433.0 300.0 440.0C294.2 447.0 292.2 454.2 290.0 460.0C287.8 465.8 287.5 472.5 287.0 475.0" stroke="#6fa8a0" stroke-width="1" opacity="0.65" /><path d="M370.5 360.9C368.2 365.8 364.5 380.7 356.6 390.1C348.7 399.5 332.7 409.2 323.0 417.4C313.3 425.6 304.1 432.3 298.4 439.4C292.7 446.6 290.7 454.6 288.9 460.3C287.1 466.1 287.6 471.6 287.4 473.8" stroke="#6fa8a0" stroke-width="1" opacity="0.65" /><path d="M372.5 361.9C369.5 367.2 362.6 384.6 354.5 393.7C346.5 402.9 333.3 408.8 324.0 416.6C314.6 424.4 303.8 433.1 298.4 440.6C293.0 448.0 293.4 455.5 291.5 461.1C289.5 466.7 287.4 471.9 286.6 474.1" stroke="#6fa8a0" stroke-width="1" opacity="0.65" />
<path d="M277.0 465.0C277.2 474.2 277.8 499.2 278.0 520.0C278.2 540.8 278.0 578.3 278.0 590.0" stroke="#3d7f78" stroke-width="1" opacity="0.8" /><path d="M276.0 465.3C276.4 474.4 277.7 498.9 278.1 519.7C278.5 540.5 278.3 578.2 278.3 589.9" stroke="#3d7f78" stroke-width="1" opacity="0.8" />
<path d="M285.0 470.0C285.0 478.3 285.0 500.3 285.0 520.0C285.0 539.7 285.0 576.7 285.0 588.0" stroke="#6fa8a0" stroke-width="1" opacity="0.65" /><path d="M285.9 470.5C285.6 478.9 284.8 501.2 284.5 520.8C284.2 540.4 284.2 576.9 284.1 588.1" stroke="#6fa8a0" stroke-width="1" opacity="0.65" />
<path d="M295.5 473.0C295.6 480.8 295.8 503.0 296.0 520.0C296.2 537.0 296.8 565.8 297.0 575.0" stroke="#3d7f78" stroke-width="1.2" opacity="0.9" />
<path d="M275.0 588.0C282.5 588.2 303.5 589.3 320.0 589.0C336.5 588.7 365.0 586.5 374.0 586.0" stroke="#3d7f78" stroke-width="1" opacity="0.8" /><path d="M274.8 587.4C282.1 587.8 302.6 589.9 318.9 589.7C335.3 589.5 363.8 586.7 372.8 586.1" stroke="#3d7f78" stroke-width="1" opacity="0.8" /><path d="M276.1 587.1C283.3 587.5 303.0 589.4 319.3 589.3C335.6 589.1 364.9 586.8 374.0 586.3" stroke="#3d7f78" stroke-width="1" opacity="0.8" />
<path d="M274.0 594.0C281.7 594.3 304.8 596.3 320.0 596.0C335.2 595.7 357.5 592.7 365.0 592.0" stroke="#6fa8a0" stroke-width="1" opacity="0.7" /><path d="M274.8 593.2C282.2 593.6 304.7 595.6 319.5 595.5C334.4 595.5 356.5 593.4 363.9 592.9" stroke="#6fa8a0" stroke-width="1" opacity="0.7" />
<path d="M297.0 574.0C297.0 569.8 296.2 553.7 297.0 549.0C297.8 544.3 300.7 544.8 302.0 546.0C303.3 547.2 303.8 555.5 305.0 556.0C306.2 556.5 307.5 549.5 309.0 549.0C310.5 548.5 313.8 550.8 314.0 553.0C314.2 555.2 309.5 561.2 310.0 562.0C310.5 562.8 315.3 557.7 317.0 558.0C318.7 558.3 320.8 562.2 320.0 564.0C319.2 565.8 312.0 567.8 312.0 569.0C312.0 570.2 319.0 569.8 320.0 571.0C321.0 572.2 321.8 575.3 318.0 576.0C314.2 576.7 300.5 575.2 297.0 575.0" stroke="#3d7f78" stroke-width="1.4" opacity="0.95" /><path d="M297.3 574.2C297.2 570.1 295.7 554.1 296.5 549.3C297.3 544.6 300.8 544.9 302.2 546.0C303.7 547.1 304.2 555.5 305.2 556.0C306.3 556.4 307.3 549.2 308.7 548.6C310.1 548.0 313.5 550.3 313.7 552.5C313.9 554.8 309.3 561.3 309.8 562.2C310.4 563.2 315.5 558.1 317.2 558.3C318.9 558.6 321.1 562.0 320.2 563.8C319.4 565.5 312.0 567.7 312.1 568.9C312.1 570.1 319.3 569.8 320.3 571.0C321.2 572.2 321.6 575.5 317.8 576.1C314.0 576.8 300.8 575.0 297.5 574.7" stroke="#3d7f78" stroke-width="1.4" opacity="0.95" />
</g>
<circle cx="473" cy="200" r="90" fill="none" stroke="#3f8079" stroke-width="1.4"/>
<g fill="none" stroke="#141414" stroke-width="2.9" stroke-linecap="round" stroke-linejoin="round">
<path d="M470 75 L460 67 Q456 61 461 62 Q465 64 466 60 Q466 56 469 58 Q472 60 472 56 Q473 50 476 52 Q479 56 479 60 Q482 56 485 58 Q487 61 483 64 Q488 62 490 65 Q490 69 484 70 L477 76"/>
</g>
<defs><pattern id="hex" width="8.66" height="15.00" patternUnits="userSpaceOnUse" patternTransform="rotate(12)">
<g fill="none" stroke="#c38c20" stroke-width="1.75">
<path d="M4.33 2.50L0.00 5.00L-4.33 2.50L-4.33 -2.50L-0.00 -5.00L4.33 -2.50Z"/>
<path d="M12.99 2.50L8.66 5.00L4.33 2.50L4.33 -2.50L8.66 -5.00L12.99 -2.50Z"/>
<path d="M8.66 10.00L4.33 12.50L0.00 10.00L-0.00 5.00L4.33 2.50L8.66 5.00Z"/>
<path d="M4.33 17.50L0.00 20.00L-4.33 17.50L-4.33 12.50L-0.00 10.00L4.33 12.50Z"/>
<path d="M12.99 17.50L8.66 20.00L4.33 17.50L4.33 12.50L8.66 10.00L12.99 12.50Z"/>
</g></pattern>
<pattern id="hex2" width="8.66" height="15.00" patternUnits="userSpaceOnUse" patternTransform="rotate(-20) scale(1.0)">
<g fill="none" stroke="#c38c20" stroke-width="1.7">
<path d="M4.33 2.50L0.00 5.00L-4.33 2.50L-4.33 -2.50L-0.00 -5.00L4.33 -2.50Z"/>
<path d="M12.99 2.50L8.66 5.00L4.33 2.50L4.33 -2.50L8.66 -5.00L12.99 -2.50Z"/>
<path d="M8.66 10.00L4.33 12.50L0.00 10.00L-0.00 5.00L4.33 2.50L8.66 5.00Z"/>
<path d="M4.33 17.50L0.00 20.00L-4.33 17.50L-4.33 12.50L-0.00 10.00L4.33 12.50Z"/>
<path d="M12.99 17.50L8.66 20.00L4.33 17.50L4.33 12.50L8.66 10.00L12.99 12.50Z"/>
</g></pattern></defs>
<polygon points="453.0,211.0 434.0,228.0 419.0,253.0 417.0,272.0 411.0,291.0 410.0,320.0 415.0,340.0 418.0,369.0 419.0,380.0 415.0,435.0 413.0,490.0 411.0,553.0 450.0,512.0 472.0,475.0 490.0,428.0 498.0,380.0 494.0,330.0 510.0,315.0 516.0,290.0 512.0,255.0 500.0,228.0 485.0,214.0 470.0,211.0" fill="#dfc4a8" />
<path d="M419 380 L415 435 L413 490 L411 553 L424 540 L428 470 L430 400 L428 370Z" fill="#e3c9a6" opacity=".8"/>
<path d="M424 385 L437 380 L432 470 L426 530 L416 545 L420 470Z" fill="#e9d3ba" opacity=".3"/>
<polygon points="457.0,182.0 485.0,178.0 483.0,200.0 480.0,212.0 460.0,212.0 460.0,198.0" fill="#b8835a" />
<polygon points="457.0,186.0 485.0,180.0 484.0,192.0 470.0,197.0 459.0,194.0" fill="#a9764e" opacity=".7"/>
<path d="M443.0 139.0C443.5 137.3 444.2 131.6 446.0 129.0C447.8 126.4 450.7 124.8 454.0 123.5C457.3 122.2 462.0 121.6 466.0 121.5C470.0 121.4 474.3 121.6 478.0 123.0C481.7 124.4 485.2 126.8 488.0 130.0C490.8 133.2 493.5 137.0 495.0 142.0C496.5 147.0 497.0 155.0 497.0 160.0C497.0 165.0 496.7 169.2 495.0 172.0C493.3 174.8 489.5 177.3 487.0 177.0C484.5 176.7 482.8 176.2 480.0 170.0C477.2 163.8 474.7 145.7 470.0 140.0C465.3 134.3 455.0 136.7 452.0 136.0Z" fill="#a9603a" />
<path d="M447.0 147.0C446.0 147.2 442.7 147.2 441.0 148.5C439.3 149.8 437.8 152.6 437.0 155.0C436.2 157.4 436.2 160.7 436.5 163.0C436.8 165.3 437.6 167.7 439.0 169.0C440.4 170.3 443.3 171.2 445.0 171.0C446.7 170.8 448.3 170.7 449.0 168.0C449.7 165.3 449.0 157.2 449.0 155.0Z" fill="#aa5e36" />
<path d="M440.0 150.0C440.5 149.7 441.8 148.0 443.0 148.0C444.2 148.0 446.8 148.5 447.0 150.0C447.2 151.5 445.2 156.0 444.0 157.0C442.8 158.0 440.7 156.2 440.0 156.0Z" fill="#bf7848" />
<path d="M447.0 139.0C447.5 138.2 448.2 135.4 450.0 134.5C451.8 133.6 454.7 133.8 458.0 133.5C461.3 133.2 466.3 132.8 470.0 133.0C473.7 133.2 477.8 132.8 480.0 134.5C482.2 136.2 482.3 138.8 483.0 143.0C483.7 147.2 483.5 155.5 484.0 160.0C484.5 164.5 486.0 167.0 486.0 170.0C486.0 173.0 485.3 175.7 484.0 178.0C482.7 180.3 480.3 182.5 478.0 184.0C475.7 185.5 473.0 186.4 470.0 187.0C467.0 187.6 463.0 188.2 460.0 187.5C457.0 186.8 454.0 185.1 452.0 183.0C450.0 180.9 448.8 178.0 448.0 175.0C447.2 172.0 447.5 167.5 447.0 165.0C446.5 162.5 445.0 161.7 445.0 160.0C445.0 158.3 446.7 157.3 447.0 155.0C447.3 152.7 447.0 147.5 447.0 146.0Z" fill="#c28b5b" />
<path d="M481.0 141.0C482.2 140.8 485.8 138.8 488.0 140.0C490.2 141.2 492.7 144.3 494.0 148.0C495.3 151.7 496.2 158.0 496.0 162.0C495.8 166.0 494.7 170.0 493.0 172.0C491.3 174.0 487.7 175.0 486.0 174.0C484.3 173.0 483.2 168.7 483.0 166.0C482.8 163.3 485.2 160.7 485.0 158.0C484.8 155.3 482.5 151.3 482.0 150.0Z" fill="#b2653a" />
<path d="M483.0 155.0C483.7 154.7 486.0 152.2 487.0 153.0C488.0 153.8 489.2 157.7 489.0 160.0C488.8 162.3 487.0 166.2 486.0 167.0C485.0 167.8 483.5 165.3 483.0 165.0Z" fill="#c4875c" />
<path d="M471.0 123.5C472.5 123.0 476.7 120.8 480.0 120.5C483.3 120.2 487.5 120.4 491.0 122.0C494.5 123.6 498.2 126.7 501.0 130.0C503.8 133.3 506.5 137.7 508.0 142.0C509.5 146.3 510.2 151.7 510.0 156.0C509.8 160.3 508.5 165.0 507.0 168.0C505.5 171.0 502.8 173.5 501.0 174.0C499.2 174.5 496.5 173.7 496.0 171.0C495.5 168.3 498.2 162.2 498.0 158.0C497.8 153.8 496.7 149.8 495.0 146.0C493.3 142.2 490.7 138.0 488.0 135.0C485.3 132.0 480.5 129.2 479.0 128.0Z" fill="#6f7d54" />
<g fill="none" stroke-linecap="round">
<path d="M476.0 123.0C478.3 124.3 486.2 127.3 490.0 131.0C493.8 134.7 497.0 140.2 499.0 145.0C501.0 149.8 501.8 155.5 502.0 160.0C502.2 164.5 500.3 170.0 500.0 172.0" stroke="#46523a" stroke-width="0.9" opacity="0.8" />
<path d="M484.0 121.0C486.3 122.5 494.3 125.8 498.0 130.0C501.7 134.2 504.5 140.3 506.0 146.0C507.5 151.7 506.8 161.0 507.0 164.0" stroke="#46523a" stroke-width="0.9" opacity="0.8" />
<path d="M488.0 127.0L503.0 133.0" stroke="#46523a" stroke-width="0.8" opacity="0.7" />
<path d="M494.0 138.0L508.0 143.0" stroke="#46523a" stroke-width="0.8" opacity="0.7" />
<path d="M497.0 152.0L510.0 154.0" stroke="#46523a" stroke-width="0.8" opacity="0.7" />
<path d="M498.0 163.0L508.0 166.0" stroke="#46523a" stroke-width="0.8" opacity="0.7" />
<path d="M470.0 123.0C472.0 122.5 478.0 120.0 482.0 120.0C486.0 120.0 490.5 121.2 494.0 123.0C497.5 124.8 500.5 127.7 503.0 131.0C505.5 134.3 507.7 138.7 509.0 143.0C510.3 147.3 511.2 152.7 511.0 157.0C510.8 161.3 508.5 167.0 508.0 169.0" stroke="#5a5a48" stroke-width="0.8" opacity="0.6" />
<path d="M447.0 140.0C447.7 139.1 448.8 135.7 451.0 134.5C453.2 133.3 456.5 133.3 460.0 133.0C463.5 132.7 468.5 132.2 472.0 132.5C475.5 132.8 479.5 134.2 481.0 134.5" stroke="#6a4a3a" stroke-width="0.9" opacity="0.55" />
<path d="M448.0 150.0C448.0 152.5 447.3 160.0 448.0 165.0C448.7 170.0 449.8 176.4 452.0 180.0C454.2 183.6 457.3 185.5 461.0 186.5C464.7 187.5 470.2 187.4 474.0 186.0C477.8 184.6 482.3 179.3 484.0 178.0" stroke="#7a4a2c" stroke-width="1" opacity="0.55" />
<path d="M452.0 184.0C453.7 185.0 458.0 189.2 462.0 190.0C466.0 190.8 472.0 190.5 476.0 189.0C480.0 187.5 484.3 182.3 486.0 181.0" stroke="#8a5a3a" stroke-width="0.9" opacity="0.5" />
<path d="M462.0 136.0C461.7 140.0 460.0 151.8 460.0 160.0C460.0 168.2 461.7 180.8 462.0 185.0" stroke="#8a5a3a" stroke-width="0.7" opacity="0.4" />
<path d="M478.0 136.0C478.2 140.0 479.3 152.0 479.0 160.0C478.7 168.0 476.5 180.0 476.0 184.0" stroke="#8a5a3a" stroke-width="0.8" opacity="0.45" />
<path d="M449.0 165.5C449.5 165.8 451.0 166.9 452.0 167.0C453.0 167.1 454.5 166.2 455.0 166.0" stroke="#8a4a34" stroke-width="1.3" opacity="0.75" />
<path d="M450.0 148.0L449.0 156.0" stroke="#6a4030" stroke-width="0.8" opacity="0.5" />
</g>
<path d="M403.0 293.0C404.5 292.3 408.3 289.2 412.0 289.0C415.7 288.8 420.7 290.5 425.0 292.0C429.3 293.5 435.3 295.7 438.0 298.0C440.7 300.3 441.7 302.7 441.0 306.0C440.3 309.3 437.5 315.5 434.0 318.0C430.5 320.5 424.3 320.8 420.0 321.0C415.7 321.2 411.0 320.8 408.0 319.0C405.0 317.2 403.0 311.5 402.0 310.0Z" fill="#b8804f" />
<path d="M436.0 300.0C441.7 299.3 459.3 297.3 470.0 296.0C480.7 294.7 493.0 291.7 500.0 292.0C507.0 292.3 510.3 294.7 512.0 298.0C513.7 301.3 512.8 308.7 510.0 312.0C507.2 315.3 503.3 317.2 495.0 318.0C486.7 318.8 469.8 316.7 460.0 317.0C450.2 317.3 439.2 321.5 436.0 320.0C432.8 318.5 440.2 310.0 441.0 308.0Z" fill="#dfc4a8" />
<polygon points="438.0,176.0 423.0,214.0 411.0,243.0 405.0,262.0 401.0,287.0 406.0,300.0 409.0,324.0 404.0,356.0 397.0,382.0 402.0,402.0 410.0,430.0 418.0,440.0 420.0,400.0 419.0,380.0 418.0,369.0 415.0,340.0 411.0,320.0 412.0,291.0 418.0,272.0 420.0,253.0 435.0,228.0 449.0,196.0 449.0,180.0" fill="#ddd2dc" opacity=".75"/>
<polygon points="497.0,160.0 507.0,182.0 520.0,199.0 530.0,228.0 536.0,257.0 541.0,299.0 546.0,334.0 553.0,380.0 558.0,435.0 547.0,453.0 544.0,527.0 551.0,604.0 355.0,604.0 380.0,585.0 413.0,553.0 450.0,512.0 472.0,475.0 490.0,428.0 498.0,380.0 493.0,324.0 508.0,314.0 512.0,299.0 505.0,289.0 476.0,270.0 455.0,256.0 457.0,243.0 470.0,211.0 480.0,200.0 487.0,180.0" fill="#ddd2dc" opacity=".8"/>
<polygon points="470.0,211.0 485.0,214.0 500.0,228.0 512.0,255.0 516.0,290.0 512.0,299.0 505.0,289.0 476.0,270.0 455.0,256.0 457.0,243.0" fill="#dfc4a8" opacity=".75"/>
<defs><filter id="wob" filterUnits="userSpaceOnUse" x="340" y="150" width="240" height="460"><feTurbulence type="fractalNoise" baseFrequency="0.055" numOctaves="2" seed="11" result="t"/><feDisplacementMap in="SourceGraphic" in2="t" scale="7" xChannelSelector="R" yChannelSelector="G"/></filter></defs>
<g filter="url(#wob)">
<polygon points="438.0,176.0 423.0,214.0 411.0,243.0 405.0,262.0 401.0,287.0 406.0,300.0 409.0,324.0 404.0,356.0 397.0,382.0 402.0,402.0 410.0,430.0 418.0,440.0 420.0,400.0 419.0,380.0 418.0,369.0 415.0,340.0 411.0,320.0 412.0,291.0 418.0,272.0 420.0,253.0 435.0,228.0 449.0,196.0 449.0,180.0" fill="url(#hex2)" />
<polygon points="497.0,160.0 507.0,182.0 520.0,199.0 530.0,228.0 536.0,257.0 541.0,299.0 546.0,334.0 553.0,380.0 558.0,435.0 547.0,453.0 544.0,527.0 551.0,604.0 355.0,604.0 380.0,585.0 413.0,553.0 450.0,512.0 472.0,475.0 490.0,428.0 498.0,380.0 493.0,324.0 508.0,314.0 512.0,299.0 505.0,289.0 476.0,270.0 455.0,256.0 457.0,243.0 470.0,211.0 480.0,200.0 487.0,180.0" fill="url(#hex)" />
</g>
<polygon points="497.0,160.0 507.0,182.0 520.0,199.0 530.0,228.0 536.0,257.0 541.0,299.0 546.0,334.0 553.0,380.0 558.0,435.0 547.0,453.0 544.0,527.0 551.0,604.0 355.0,604.0 380.0,585.0 413.0,553.0 450.0,512.0 472.0,475.0 490.0,428.0 498.0,380.0 493.0,324.0 508.0,314.0 512.0,299.0 505.0,289.0 476.0,270.0 455.0,256.0 457.0,243.0 470.0,211.0 480.0,200.0 487.0,180.0" fill="#c38c20" opacity=".07"/>
<polygon points="437.0,172.0 446.0,171.0 449.0,176.0 453.0,184.0 459.0,190.0 461.0,212.0 452.0,215.0 440.0,226.0 430.0,228.0 428.0,214.0 434.0,192.0" fill="#c38c20" />
<polygon points="485.0,178.0 494.0,173.0 500.0,176.0 504.0,192.0 506.0,212.0 498.0,222.0 486.0,216.0 480.0,212.0 483.0,200.0" fill="#c38c20" />
<g fill="none" stroke="#e4cf9a" stroke-width=".8" opacity=".7">
<path d="M441.0 178.0C440.5 181.0 439.2 190.0 438.0 196.0C436.8 202.0 434.7 211.0 434.0 214.0" stroke="#e9d9b0" stroke-width="0.8" opacity="0.7" />
<path d="M446.0 180.0C445.8 183.0 445.8 191.7 445.0 198.0C444.2 204.3 441.7 214.7 441.0 218.0" stroke="#e9d9b0" stroke-width="0.8" opacity="0.6" />
<path d="M452.0 190.0L452.0 206.0" stroke="#e9d9b0" stroke-width="0.8" opacity="0.6" />
<path d="M490.0 182.0C490.5 185.0 492.2 194.7 493.0 200.0C493.8 205.3 494.7 211.7 495.0 214.0" stroke="#e9d9b0" stroke-width="0.8" opacity="0.6" />
</g>
<g fill="none" stroke="#c38c20" stroke-linecap="round" stroke-linejoin="round">
<path d="M438.0 176.0C435.5 182.3 427.5 202.8 423.0 214.0C418.5 225.2 414.0 235.0 411.0 243.0C408.0 251.0 406.7 254.7 405.0 262.0C403.3 269.3 400.8 280.7 401.0 287.0C401.2 293.3 405.2 297.8 406.0 300.0" stroke="#c38c20" stroke-width="2.4" opacity="1" />
<path d="M406.0 318.0C406.5 320.0 409.3 323.7 409.0 330.0C408.7 336.3 406.0 347.3 404.0 356.0C402.0 364.7 397.3 374.3 397.0 382.0C396.7 389.7 399.8 394.0 402.0 402.0C404.2 410.0 407.3 423.7 410.0 430.0C412.7 436.3 416.7 438.3 418.0 440.0" stroke="#c38c20" stroke-width="2.4" opacity="1" />
<path d="M449.0 196.0C446.7 201.3 439.8 218.5 435.0 228.0C430.2 237.5 422.8 245.7 420.0 253.0C417.2 260.3 419.3 265.7 418.0 272.0C416.7 278.3 413.0 287.8 412.0 291.0" stroke="#c38c20" stroke-width="1.6" opacity="0.9" />
<path d="M497.0 160.0C498.7 163.7 503.2 175.5 507.0 182.0C510.8 188.5 516.2 191.3 520.0 199.0C523.8 206.7 527.3 218.3 530.0 228.0C532.7 237.7 534.2 245.2 536.0 257.0C537.8 268.8 539.3 286.2 541.0 299.0C542.7 311.8 544.0 320.5 546.0 334.0C548.0 347.5 551.0 363.2 553.0 380.0C555.0 396.8 559.0 422.8 558.0 435.0C557.0 447.2 548.8 450.0 547.0 453.0" stroke="#c38c20" stroke-width="3" opacity="1" />
<path d="M547.0 453.0C546.5 459.2 544.5 477.7 544.0 490.0C543.5 502.3 543.3 513.7 544.0 527.0C544.7 540.3 546.8 557.2 548.0 570.0C549.2 582.8 550.5 598.3 551.0 604.0" stroke="#c38c20" stroke-width="2.6" opacity="1" />
<path d="M470.0 211.0C467.8 216.3 459.5 235.5 457.0 243.0C454.5 250.5 451.8 251.5 455.0 256.0C458.2 260.5 467.7 264.5 476.0 270.0C484.3 275.5 499.0 284.2 505.0 289.0C511.0 293.8 510.8 297.3 512.0 299.0" stroke="#c38c20" stroke-width="2.4" opacity="1" />
<path d="M498.0 380.0C496.7 388.0 494.3 412.2 490.0 428.0C485.7 443.8 478.7 461.0 472.0 475.0C465.3 489.0 459.8 499.0 450.0 512.0C440.2 525.0 424.7 540.8 413.0 553.0C401.3 565.2 389.7 576.5 380.0 585.0C370.3 593.5 359.2 600.8 355.0 604.0" stroke="#c38c20" stroke-width="3.2" opacity="1" />
<path d="M493.0 324.0C493.2 328.3 493.2 340.7 494.0 350.0C494.8 359.3 497.3 375.0 498.0 380.0" stroke="#c38c20" stroke-width="2.2" opacity="1" />
<path d="M492.0 176.0C493.7 180.0 498.5 189.8 502.0 200.0C505.5 210.2 509.3 224.3 513.0 237.0C516.7 249.7 521.2 262.2 524.0 276.0C526.8 289.8 527.3 302.7 530.0 320.0C532.7 337.3 537.0 361.7 540.0 380.0C543.0 398.3 546.7 421.7 548.0 430.0" stroke="#c38c20" stroke-width="3.8" opacity="1" />
<path d="M486.0 185.0C487.7 190.0 492.7 204.2 496.0 215.0C499.3 225.8 502.7 238.3 506.0 250.0C509.3 261.7 513.7 273.3 516.0 285.0C518.3 296.7 519.0 305.8 520.0 320.0C521.0 334.2 522.7 353.8 522.0 370.0C521.3 386.2 517.0 409.2 516.0 417.0" stroke="#c38c20" stroke-width="2.7" opacity="1" />
<path d="M547.0 453.0C542.5 455.8 531.2 462.2 520.0 470.0C508.8 477.8 493.3 488.3 480.0 500.0C466.7 511.7 453.3 527.5 440.0 540.0C426.7 552.5 412.5 564.5 400.0 575.0C387.5 585.5 370.8 598.3 365.0 603.0" stroke="#c38c20" stroke-width="4.9" opacity="1" />
<path d="M535.0 402.0C531.3 413.7 525.3 448.8 513.0 472.0C500.7 495.2 477.7 522.2 461.0 541.0C444.3 559.8 424.5 574.7 413.0 585.0C401.5 595.3 395.5 600.0 392.0 603.0" stroke="#c38c20" stroke-width="4.3" opacity="1" />
<path d="M516.0 417.0C513.7 430.8 510.0 469.5 502.0 500.0C494.0 530.5 473.7 583.3 468.0 600.0" stroke="#c38c20" stroke-width="4.1" opacity="1" />
<path d="M553.0 380.0C550.8 386.7 545.5 405.0 540.0 420.0C534.5 435.0 523.3 461.7 520.0 470.0" stroke="#c38c20" stroke-width="3.5" opacity="1" />
<path d="M528.0 330.0C529.0 336.7 532.8 358.0 534.0 370.0C535.2 382.0 534.8 396.7 535.0 402.0" stroke="#c38c20" stroke-width="3.2" opacity="1" />
<path d="M440.0 540.0C436.7 545.0 426.7 561.7 420.0 570.0C413.3 578.3 406.7 584.5 400.0 590.0C393.3 595.5 383.3 600.8 380.0 603.0" stroke="#c38c20" stroke-width="3.0" opacity="1" />
<path d="M480.0 500.0C478.3 506.7 475.0 527.5 470.0 540.0C465.0 552.5 456.7 564.5 450.0 575.0C443.3 585.5 433.3 598.3 430.0 603.0" stroke="#c38c20" stroke-width="3.0" opacity="1" />
<path d="M413.0 553.0C410.0 556.7 402.2 568.8 395.0 575.0C387.8 581.2 374.2 587.5 370.0 590.0" stroke="#c38c20" stroke-width="3.2" opacity="1" />
<path d="M520.0 470.0C520.7 478.3 524.0 505.0 524.0 520.0C524.0 535.0 519.8 546.2 520.0 560.0C520.2 573.8 524.2 595.8 525.0 603.0" stroke="#c38c20" stroke-width="2.4" opacity="0.9" />
<path d="M425.0 548.0C420.5 552.0 406.8 564.0 398.0 572.0C389.2 580.0 378.0 590.7 372.0 596.0C366.0 601.3 363.7 602.7 362.0 604.0" stroke="#c38c20" stroke-width="3.2" opacity="1" />
<path d="M445.0 530.0C440.8 534.3 428.8 547.0 420.0 556.0C411.2 565.0 399.5 576.0 392.0 584.0C384.5 592.0 377.8 600.7 375.0 604.0" stroke="#c38c20" stroke-width="2.6" opacity="1" />
<path d="M372.0 594.0C378.3 592.7 397.8 590.7 410.0 586.0C422.2 581.3 435.0 573.7 445.0 566.0C455.0 558.3 465.8 544.3 470.0 540.0" stroke="#c38c20" stroke-width="2.4" opacity="0.9" />
<path d="M400.0 600.0C406.7 598.3 427.5 595.7 440.0 590.0C452.5 584.3 469.2 570.0 475.0 566.0" stroke="#c38c20" stroke-width="2.2" opacity="0.9" />
<path d="M450.0 512.0C447.7 516.7 441.0 532.0 436.0 540.0C431.0 548.0 422.7 556.7 420.0 560.0" stroke="#c38c20" stroke-width="2.4" opacity="1" />
</g>
<g fill="none" stroke-linecap="round">
<path d="M453.0 211.0C449.8 213.8 439.5 221.0 434.0 228.0C428.5 235.0 422.7 245.7 420.0 253.0C417.3 260.3 418.3 268.8 418.0 272.0" stroke="#4a4040" stroke-width="1" opacity="0.6" />
<path d="M420.0 262.0C421.7 263.3 425.0 267.8 430.0 270.0C435.0 272.2 443.7 274.5 450.0 275.0C456.3 275.5 465.0 273.3 468.0 273.0" stroke="#4a4040" stroke-width="1" opacity="0.7" />
<path d="M418.0 272.0C419.2 273.7 421.3 279.3 425.0 282.0C428.7 284.7 432.5 287.3 440.0 288.0C447.5 288.7 465.0 286.3 470.0 286.0" stroke="#4a4040" stroke-width="1" opacity="0.6" />
<path d="M436.0 300.0C441.7 299.3 459.3 297.3 470.0 296.0C480.7 294.7 493.0 291.7 500.0 292.0C507.0 292.3 510.0 297.0 512.0 298.0" stroke="#4a4040" stroke-width="1" opacity="0.7" />
<path d="M436.0 320.0C440.0 319.5 450.2 317.3 460.0 317.0C469.8 316.7 486.7 318.8 495.0 318.0C503.3 317.2 507.5 313.0 510.0 312.0" stroke="#4a4040" stroke-width="1" opacity="0.7" />
<path d="M403.0 293.0C405.0 294.2 410.5 298.8 415.0 300.0C419.5 301.2 425.7 299.0 430.0 300.0C434.3 301.0 439.2 305.0 441.0 306.0" stroke="#4a4040" stroke-width="1.1" opacity="0.8" /><path d="M404.1 291.5C405.8 292.8 409.8 297.6 414.3 299.2C418.7 300.8 426.2 300.3 430.7 301.3C435.3 302.4 439.9 304.8 441.7 305.5" stroke="#4a4040" stroke-width="1.1" opacity="0.8" />
<path d="M402.0 310.0C404.2 310.3 410.3 311.0 415.0 312.0C419.7 313.0 426.2 315.0 430.0 316.0C433.8 317.0 436.7 317.7 438.0 318.0" stroke="#4a4040" stroke-width="1.1" opacity="0.8" /><path d="M403.1 309.5C405.0 310.1 409.7 312.0 414.2 313.2C418.8 314.4 426.3 315.5 430.4 316.6C434.4 317.6 437.1 319.0 438.5 319.4" stroke="#4a4040" stroke-width="1.1" opacity="0.8" />
<path d="M410.0 296.0C411.7 298.3 416.3 306.3 420.0 310.0C423.7 313.7 430.0 316.7 432.0 318.0" stroke="#4a4040" stroke-width="1" opacity="0.7" /><path d="M409.9 297.0C411.7 299.4 416.9 307.5 420.6 311.1C424.2 314.7 429.9 317.4 431.8 318.7" stroke="#4a4040" stroke-width="1" opacity="0.7" />
<path d="M395.0 288.0C396.2 289.3 401.2 292.0 402.0 296.0C402.8 300.0 399.3 307.7 400.0 312.0C400.7 316.3 405.0 320.3 406.0 322.0" stroke="#6a6a78" stroke-width="1" opacity="0.5" /><path d="M395.2 287.4C396.2 288.9 400.5 292.1 401.1 296.4C401.7 300.7 398.1 309.2 398.7 313.2C399.4 317.3 403.9 319.4 404.9 320.6" stroke="#6a6a78" stroke-width="1" opacity="0.5" />
<path d="M412.0 322.0C412.3 325.8 412.8 336.7 414.0 345.0C415.2 353.3 418.0 362.8 419.0 372.0C420.0 381.2 420.5 388.7 420.0 400.0C419.5 411.3 416.7 433.3 416.0 440.0" stroke="#4a4040" stroke-width="1" opacity="0.6" />
<path d="M455.0 330.0C452.5 332.5 443.8 338.3 440.0 345.0C436.2 351.7 433.7 360.8 432.0 370.0C430.3 379.2 430.7 388.3 430.0 400.0C429.3 411.7 428.7 423.3 428.0 440.0C427.3 456.7 426.7 482.5 426.0 500.0C425.3 517.5 424.3 537.5 424.0 545.0" stroke="#4a4040" stroke-width="1" opacity="0.55" />
<path d="M440.0 340.0C439.3 346.7 437.0 365.0 436.0 380.0C435.0 395.0 434.3 421.7 434.0 430.0" stroke="#4a4040" stroke-width="0.8" opacity="0.4" />
<path d="M419.0 400.0C418.8 406.7 418.5 426.7 418.0 440.0C417.5 453.3 416.3 473.3 416.0 480.0" stroke="#3a3030" stroke-width="1.6" opacity="0.7" />
<path d="M491.0 330.0L492.0 355.0" stroke="#4a4040" stroke-width="1.4" opacity="0.7" />
<path d="M425.0 399.0C424.3 405.8 422.3 426.5 421.0 440.0C419.7 453.5 418.2 467.2 417.0 480.0C415.8 492.8 414.5 510.8 414.0 517.0" stroke="#4a4040" stroke-width="1.2" opacity="0.7" />
<path d="M449.0 370.0C447.7 378.3 443.3 404.0 441.0 420.0C438.7 436.0 437.2 448.8 435.0 466.0C432.8 483.2 429.2 513.5 428.0 523.0" stroke="#4a4040" stroke-width="1" opacity="0.6" />
<path d="M452.0 372.0C451.0 380.0 448.0 405.3 446.0 420.0C444.0 434.7 441.0 453.3 440.0 460.0" stroke="#4a4040" stroke-width="0.8" opacity="0.45" />
<path d="M422.0 392.0C421.5 398.3 420.0 417.0 419.0 430.0C418.0 443.0 416.5 463.3 416.0 470.0" stroke="#6a5a4a" stroke-width="0.9" opacity="0.5" />
<path d="M470.0 211.0C471.7 214.2 477.0 223.5 480.0 230.0C483.0 236.5 486.7 246.7 488.0 250.0" stroke="#6a6a88" stroke-width="0.8" opacity="0.4" />
<path d="M512.0 200.0C513.3 206.7 517.7 226.7 520.0 240.0C522.3 253.3 524.3 266.7 526.0 280.0C527.7 293.3 529.3 313.3 530.0 320.0" stroke="#6a6a88" stroke-width="0.8" opacity="0.5" />
</g>
<g font-family="Liberation Sans, sans-serif" font-style="italic" font-weight="bold" fill="#161416" stroke="#161416" stroke-width=".4">
<text x="569" y="89.500" font-size="15" transform="rotate(-19 569 89.500)" textLength="48" lengthAdjust="spacingAndGlyphs">ombre</text>
<text x="580" y="99" font-size="13.500" transform="rotate(-19 580 99)" textLength="58" lengthAdjust="spacingAndGlyphs">to show</text>
<text x="638.500" y="90" font-size="14" transform="rotate(10 638.500 90)">?</text>
<text x="600" y="108" font-size="15" transform="rotate(-20 600 108)" textLength="38" lengthAdjust="spacingAndGlyphs">light</text>
</g>
<g fill="none" stroke-linecap="round">
<path d="M552.500 85 L550 93.500" stroke="#6a6466" stroke-width="1.200"/>
<path d="M567.500 83.500 L563.500 96" stroke="#4a4547" stroke-width="2.600"/>
</g>
<g font-family="Liberation Sans, sans-serif" font-style="italic" fill="#2a2628" stroke="#2a2628" stroke-width=".55">
<text x="316.500" y="503.500" font-size="16" transform="rotate(-27 316.500 503.500)" textLength="49" lengthAdjust="spacingAndGlyphs">change</text>
<text x="333" y="514" font-size="13" transform="rotate(-22 333 514)">to</text>
<text x="333.500" y="531" font-size="15.500" transform="rotate(-26.500 333.500 531)" textLength="66" lengthAdjust="spacingAndGlyphs">mushroom</text>
<text x="0" y="0" font-size="40" transform="translate(390.500 502.500) rotate(4) scale(.52 1)" stroke-width=".9">?</text>
</g>
<g fill="none" stroke="#2a2628" stroke-width="1.500" stroke-linecap="round">
<path d="M544 120 L532 139 M529 130 L531 140 L541 136"/>
<path d="M320.500 524 L311 541 M310 534 L312 542.500 L320.500 538.500"/>
</g>
<defs>
<filter id="forest" x="0" y="0" width="100%" height="100%">
<feTurbulence type="fractalNoise" baseFrequency="0.16 0.2" numOctaves="3" seed="4" result="n"/>
<feColorMatrix in="n" type="matrix" values="1.5 0 0 0 -0.42  1.4 0 0 0 -0.4  1.2 0 0 0 -0.36  0 0 0 0 1"/>
</filter>
<filter id="b2"><feGaussianBlur stdDeviation="2"/></filter>
<filter id="b1"><feGaussianBlur stdDeviation="1"/></filter>
<filter id="b05"><feGaussianBlur stdDeviation=".5"/></filter>
<filter id="b4"><feGaussianBlur stdDeviation="4"/></filter>
<filter id="wob2" filterUnits="userSpaceOnUse" x="270" y="78" width="90" height="90"><feTurbulence type="fractalNoise" baseFrequency="0.09" numOctaves="2" seed="3" result="t"/><feDisplacementMap in="SourceGraphic" in2="t" scale="4.500" xChannelSelector="R" yChannelSelector="G"/><feGaussianBlur stdDeviation=".35"/></filter>
<clipPath id="cp1"><rect x="252" y="47" width="112" height="118"/></clipPath>
<clipPath id="cp2"><rect x="252" y="165" width="112" height="161"/></clipPath>
<pattern id="mhex" width="5.2" height="9" patternUnits="userSpaceOnUse" patternTransform="rotate(8)">
<rect width="5.2" height="9" fill="#f1b21c"/>
<ellipse cx="0" cy="0" rx="1.7" ry="2.2" fill="#6e4610"/><ellipse cx="5.2" cy="0" rx="1.7" ry="2.2" fill="#6e4610"/>
<ellipse cx="2.6" cy="4.5" rx="1.7" ry="2.2" fill="#7a4e12"/>
<ellipse cx="0" cy="9" rx="1.7" ry="2.2" fill="#6e4610"/><ellipse cx="5.2" cy="9" rx="1.7" ry="2.2" fill="#6e4610"/>
</pattern>
</defs>
<g clip-path="url(#cp1)">
<rect x="252" y="47" width="112" height="118" fill="#45433b"/>
<rect x="252" y="47" width="112" height="118" filter="url(#forest)" opacity=".62"/>
<g filter="url(#b2)">
<ellipse cx="308" cy="52" rx="58" ry="6" fill="#4a5444" opacity="0.8"/>
<ellipse cx="266" cy="64" rx="7" ry="10" fill="#8a968c" opacity="0.55"/>
<ellipse cx="290" cy="60" rx="12" ry="5" fill="#7a8878" opacity="0.5"/>
<ellipse cx="288" cy="94" rx="15" ry="7" fill="#202024" opacity="0.8"/>
<ellipse cx="348" cy="100" rx="16" ry="16" fill="#7c7a72" opacity="0.6"/>
<ellipse cx="300" cy="162" rx="60" ry="6" fill="#2a2622" opacity="0.9"/>
<ellipse cx="262" cy="152" rx="14" ry="8" fill="#35302a" opacity="0.8"/>
<ellipse cx="350" cy="152" rx="14" ry="9" fill="#4a443e" opacity="0.7"/>
<ellipse cx="268" cy="100" rx="16" ry="5" fill="#5a5a52" opacity="0.5"/>
<ellipse cx="352" cy="130" rx="12" ry="12" fill="#74706a" opacity="0.6"/>
</g>
<g filter="url(#b1)">
<ellipse cx="257" cy="72" rx="5" ry="5" fill="#58ad54" opacity="0.85"/>
<ellipse cx="263" cy="80" rx="5" ry="4" fill="#43a34a" opacity="0.85"/>
<ellipse cx="256" cy="90" rx="4" ry="6" fill="#58ad54" opacity="0.8"/>
<ellipse cx="268" cy="96" rx="5" ry="4" fill="#43a34a" opacity="0.7"/>
<ellipse cx="283" cy="70" rx="7" ry="5" fill="#58ad54" opacity="0.8"/>
<ellipse cx="292" cy="76" rx="6" ry="5" fill="#6cbc68" opacity="0.8"/>
<ellipse cx="276" cy="80" rx="5" ry="4" fill="#43a34a" opacity="0.8"/>
<ellipse cx="318" cy="63" rx="8" ry="4" fill="#58ad54" opacity="0.85"/>
<ellipse cx="330" cy="68" rx="9" ry="5" fill="#6cbc68" opacity="0.85"/>
<ellipse cx="322" cy="72" rx="7" ry="4" fill="#43a34a" opacity="0.85"/>
<ellipse cx="342" cy="64" rx="6" ry="4" fill="#58ad54" opacity="0.7"/>
<ellipse cx="352" cy="72" rx="6" ry="6" fill="#58ad54" opacity="0.8"/>
<ellipse cx="358" cy="80" rx="5" ry="5" fill="#43a34a" opacity="0.75"/>
<ellipse cx="347" cy="83" rx="4" ry="3" fill="#58ad54" opacity="0.6"/>
<ellipse cx="262" cy="108" rx="6" ry="5" fill="#43a34a" opacity="0.9"/>
<ellipse cx="270" cy="112" rx="6" ry="4" fill="#58ad54" opacity="0.9"/>
<ellipse cx="257" cy="116" rx="5" ry="5" fill="#6cbc68" opacity="0.85"/>
<ellipse cx="266" cy="122" rx="6" ry="5" fill="#43a34a" opacity="0.9"/>
<ellipse cx="258" cy="128" rx="6" ry="4" fill="#58ad54" opacity="0.9"/>
<ellipse cx="272" cy="128" rx="4" ry="4" fill="#43a34a" opacity="0.8"/>
<ellipse cx="259" cy="138" rx="6" ry="4" fill="#43a34a" opacity="0.9"/>
<ellipse cx="256" cy="146" rx="4" ry="3" fill="#58ad54" opacity="0.6"/>
<ellipse cx="355" cy="121" rx="4" ry="3" fill="#43a34a" opacity="0.7"/>
<ellipse cx="282" cy="110" rx="4" ry="3" fill="#58ad54" opacity="0.5"/>
</g>
<g stroke-linecap="round" fill="none" filter="url(#b05)">
<path d="M265 48 Q261 62 259 78" stroke="#d0cab8" stroke-width="1.100" opacity=".85"/>
<path d="M275 68 Q284 80 292 89" stroke="#cfc8b6" stroke-width="1.500" opacity=".85"/>
<path d="M325 47 Q340 64 348 80 Q354 92 362 104" stroke="#7a6a5a" stroke-width="1.600" opacity=".85"/>
<path d="M333 82 Q346 96 360 110" stroke="#2e2622" stroke-width="2.400" opacity=".8"/>
<path d="M322 86 Q332 80 344 76" stroke="#8a7e70" stroke-width="1.300" opacity=".7"/>
<path d="M254 112 Q270 104 288 100" stroke="#26242a" stroke-width="2.600" opacity=".7"/>
<path d="M254 150 Q266 140 278 132" stroke="#4a4038" stroke-width="1.600" opacity=".7"/>
<path d="M340 146 Q350 152 362 160" stroke="#8a8074" stroke-width="1.300" opacity=".7"/>
<path d="M336 160 Q346 150 356 146" stroke="#2a2420" stroke-width="2" opacity=".7"/>
</g>
<defs><mask id="mm"><rect x="252" y="47" width="112" height="118" fill="#000"/><g filter="url(#b2)"><ellipse cx="299" cy="122" rx="9" ry="30" fill="#fff"/><ellipse cx="325" cy="126" rx="10" ry="30" fill="#fff"/><ellipse cx="342" cy="142" rx="7" ry="9" fill="#ccc"/><ellipse cx="310" cy="150" rx="22" ry="8" fill="#bbb"/><ellipse cx="310" cy="124" rx="8" ry="30" fill="#666"/></g></mask></defs>
<g filter="url(#b05)">
<path d="M308 84 Q303 87 298 91 Q290 96 286 104 Q281 113 279 124 Q276 136 278 148 Q279 154 282 157 Q295 161 310 161 Q325 161 336 157 Q345 150 352 140 Q348 126 342 114 Q337 103 330 97 Q322 90 315 85Z" fill="#f5b81c"/>
<path d="M304 92 L301 156 L318 156 L315 92Z" fill="#f7cf6a" opacity=".7" filter="url(#b1)"/>
<g mask="url(#mm)"><path d="M308 84 Q303 87 298 91 Q290 96 286 104 Q281 113 279 124 Q276 136 278 148 Q279 154 282 157 Q295 161 310 161 Q325 161 336 157 Q345 150 352 140 Q348 126 342 114 Q337 103 330 97 Q322 90 315 85Z" fill="url(#mhex)" filter="url(#wob2)"/></g>
<path d="M308 84 Q303 87 298 91 Q290 96 286 104 Q281 113 279 124 Q276 136 278 148 Q279 154 282 157 Q295 161 310 161 Q325 161 336 157 Q345 150 352 140 Q348 126 342 114 Q337 103 330 97 Q322 90 315 85Z" fill="none" stroke="#f4b51c" stroke-width="1.800"/>
<ellipse cx="305.500" cy="72" rx="10.500" ry="11.500" fill="#7f7446"/>
<ellipse cx="303" cy="68" rx="6" ry="6" fill="#a09260" opacity=".55"/>
<g fill="#3e3820" opacity=".85"><circle cx="297.5" cy="63.5" r=".85"/><circle cx="300.5" cy="63.5" r=".85"/><circle cx="303.5" cy="63.5" r=".85"/><circle cx="306.5" cy="63.5" r=".85"/><circle cx="309.5" cy="63.5" r=".85"/><circle cx="312.5" cy="63.5" r=".85"/><circle cx="299.0" cy="66.4" r=".85"/><circle cx="302.0" cy="66.4" r=".85"/><circle cx="305.0" cy="66.4" r=".85"/><circle cx="308.0" cy="66.4" r=".85"/><circle cx="311.0" cy="66.4" r=".85"/><circle cx="314.0" cy="66.4" r=".85"/><circle cx="297.5" cy="69.3" r=".85"/><circle cx="300.5" cy="69.3" r=".85"/><circle cx="303.5" cy="69.3" r=".85"/><circle cx="306.5" cy="69.3" r=".85"/><circle cx="309.5" cy="69.3" r=".85"/><circle cx="312.5" cy="69.3" r=".85"/><circle cx="299.0" cy="72.2" r=".85"/><circle cx="302.0" cy="72.2" r=".85"/><circle cx="305.0" cy="72.2" r=".85"/><circle cx="308.0" cy="72.2" r=".85"/><circle cx="311.0" cy="72.2" r=".85"/><circle cx="314.0" cy="72.2" r=".85"/><circle cx="297.5" cy="75.1" r=".85"/><circle cx="300.5" cy="75.1" r=".85"/><circle cx="303.5" cy="75.1" r=".85"/><circle cx="306.5" cy="75.1" r=".85"/><circle cx="309.5" cy="75.1" r=".85"/><circle cx="312.5" cy="75.1" r=".85"/><circle cx="299.0" cy="78.0" r=".85"/><circle cx="302.0" cy="78.0" r=".85"/><circle cx="305.0" cy="78.0" r=".85"/><circle cx="308.0" cy="78.0" r=".85"/><circle cx="311.0" cy="78.0" r=".85"/><circle cx="314.0" cy="78.0" r=".85"/><circle cx="297.5" cy="80.9" r=".85"/><circle cx="300.5" cy="80.9" r=".85"/><circle cx="303.5" cy="80.9" r=".85"/><circle cx="306.5" cy="80.9" r=".85"/><circle cx="309.5" cy="80.9" r=".85"/><circle cx="312.5" cy="80.9" r=".85"/></g>
<path d="M299 82 Q306 87 313 82 L314 87 L303 87Z" fill="#e2b23c"/>
</g>
</g>
<defs><linearGradient id="vg" x1="0" y1="0" x2="1" y2="0"><stop offset="0" stop-color="#c4beb2" stop-opacity=".8"/><stop offset=".55" stop-color="#a29d93" stop-opacity=".72"/><stop offset="1" stop-color="#716d66" stop-opacity=".6"/></linearGradient><linearGradient id="dg" x1="0" y1="0" x2="1" y2="0"><stop offset="0" stop-color="#cfc8ba"/><stop offset=".35" stop-color="#f3eee4"/><stop offset=".7" stop-color="#ddd6c8"/><stop offset="1" stop-color="#b3ada0"/></linearGradient></defs>
<g clip-path="url(#cp2)">
<rect x="252" y="165" width="112" height="161" fill="#201812"/>
<rect x="345" y="281" width="19" height="45" fill="#2e2720"/>
<g filter="url(#b05)">
<path d="M305 168.500 Q315 167 320 178 Q326 198 332 216 Q339 238 342.500 254 Q345 268 341 282 Q337 300 341.500 326 L297 326 Q296 300 293 275 Q288 250 290 238 Q285 226 290 214 Q294 202 299 193 Q297 176 305 168.500Z" fill="url(#vg)"/>
<path d="M318 186 Q328 215 335 245 Q338 268 335 290 Q333 310 335 326 L327 326 Q330 290 327 255 Q324 220 316 196Z" fill="#a6a198" opacity=".55"/>
<path d="M338 256 Q342 268 339 282 Q336 300 339 326" fill="none" stroke="#b8b3a8" stroke-width="1" opacity=".7"/>
<path d="M324 200 Q332 232 334 262 Q335 290 331 326" fill="none" stroke="#c9c4b9" stroke-width="1.400" opacity=".6"/>
<path d="M329 214 Q337 240 339 262 Q339 290 336 326" fill="none" stroke="#5e5a55" stroke-width="1.200" opacity=".5"/>
<path d="M321 192 Q326 214 327 240" fill="none" stroke="#d8d3c8" stroke-width="1.200" opacity=".55"/>
<path d="M296 199 Q305 194 316 197 Q321 206 320 222 Q318 236 319.500 246 Q323 262 321 280 Q320 304 323 326 L298 326 Q298 300 296 282 Q293 262 292 246 Q290 236 292 230 Q288 226 291 214 Q293 205 296 199Z" fill="url(#dg)"/>
<path d="M306 238 Q312 256 311 280 Q310 305 313 326 L304 326 Q305 300 303 276 Q301 256 299 244Z" fill="#faf6ee" opacity=".8"/>
<path d="M293 246 Q294 270 297 290 L299 326 L297.500 326 Q297 300 294 278Z" fill="#8f8a80" opacity=".6"/>
<path d="M304 188 L312 187 L315 198 Q306 201 300 198Z" fill="#cfc7b9"/>
<ellipse cx="307" cy="180.500" rx="6.300" ry="8.500" fill="#d9d1c4"/>
<path d="M301 176 Q303 168.500 310 169 Q318 170 319 180 Q319 186 317 190 Q315 180 311 175 Q306 173 301 176Z" fill="#f1ece2"/>
<path d="M302.500 180.500 h3 M303.500 185.500 h2.500" stroke="#6a625a" stroke-width=".9" fill="none"/>
<path d="M295 204 Q290 212 289 220 Q292 218 298 220 L306 224 L318 226 L318 231 L304 230.500 Q296 231.500 288.500 229 Q286 225 288 221" fill="#d6cec0"/>
<ellipse cx="292" cy="224.500" rx="4.500" ry="3.600" fill="#e4ddd0"/>
</g>
</g>
</g>
<!-- navigator thumbnail -->
<rect x="2" y="222" width="144.500" height="182.500" fill="#b82626"/>
<use href="#art" transform="translate(2.800 224) scale(0.3213) translate(-252 -47)"/>
</svg>

<!-- bottom bar -->
<div class="a" style="left:148px;top:604px;width:711px;height:13px;background:#444"></div>
<div class="a" style="left:148px;top:617px;width:711px;height:9px;background:#333"></div>
<!-- v scrollbar -->
<div class="a" style="left:847px;top:42px;width:12px;height:562px;background:#3e3e3e"></div>
<div class="a" style="left:849px;top:216px;width:9px;height:212px;background:#565656;border-radius:4px"></div>
<!-- right gap -->
<div class="a" style="left:859px;top:0;width:141px;height:626px;background:#3a3a3a"></div>
<!-- right panel -->
<div class="a" id="rp" style="left:875px;top:19px;width:125px;height:607px;background:#4a4a4a"></div>
<!-- ===== UI icons overlay ===== -->
<svg width="1000" height="626" viewBox="0 0 1000 626" style="pointer-events:none">
<g fill="none" stroke="#8a8a8a" stroke-width="1.3" stroke-linecap="round" stroke-linejoin="round">
 <!-- left top -->
 <path d="M10.500 2.500L6 7L10.500 11.500M15.500 2.500L11 7L15.500 11.500"/>
 <path d="M36.500 2.500L32.500 7L36.500 11.500"/>
 <path d="M139.500 2v13M141.500 2v13" stroke="#5a5a5a" stroke-width="1"/>
 <path d="M8 24h7M8 27.500h7M8 31h7" stroke-width="1.2"/>
 <!-- right top -->
 <path d="M867 2.500L862.500 7L867 11.500M872 2.500L867.500 7L872 11.500"/>
 <path d="M878.500 2v14M880.500 2v14M882.500 2v14" stroke="#5a5a5a" stroke-width="1"/>
</g>
<!-- navigator icon -->
<g fill="#4b4b4b" stroke="#bdbdbd" stroke-width="1.2">
 <rect x="31.500" y="23" width="11" height="8.500" rx="1.500"/>
 <rect x="28.500" y="25.500" width="11" height="8.500" rx="1.500"/>
 <rect x="30.500" y="27.500" width="7" height="4.500" fill="#7a7a7a" stroke="none"/>
</g>

<!-- ===== toolbar icons ===== -->
<g fill="none" stroke="#bcbcbc" stroke-width="1.400" stroke-linecap="round" stroke-linejoin="round">
 <!-- hamburger -->
 <path d="M152.500 4h14M152.500 9h14M152.500 14h14" stroke-width="2.200" stroke-linecap="butt"/>
 <!-- pen box -->
 <path d="M184 4.500h-8.500v12.500h14.500v-7" />
 <path d="M193.500 -1l-8 8.500l2.500 2.500l6.500-7.500z" fill="#bcbcbc" stroke="#bcbcbc" stroke-width="1.600"/>
 <path d="M185.500 8c-1 1.500-1 3-2 4.500c-1 1.500-3 1.500-3.500 0c-.4-1.200 .3-2.200 1.200-2.400" stroke-width="1.300"/>
 <path d="M201 7.500l3 3l3-3" stroke-width="1.200"/>
 <!-- clip icon -->
 <rect x="214.500" y="0.500" width="17.500" height="17" rx="2.500"/>
 <path d="M229 6.500c-1.500-2.500-5-2-7.500-.5c-3 1.800-4.500 5-2.500 7c1.800 1.800 5.500 .8 7.500-.8c2-1.600 2.500-4 .8-4.800c-1.500-.7-3.800 .3-5 1.600c-1 1.100-.8 2.300 .5 2.300" stroke-width="1.600"/>
 <path d="M240.500 1v19" stroke="#5c5c5c" stroke-width="1"/>
 <!-- new doc -->
 <path d="M250.500 1.500h10.500c.800 0 1 .3 1 1v8M250.500 1.500v11l3.500 3.500h3M250.500 12.500c2 0 3.500 .500 3.500 3.500" />
 <circle cx="262" cy="15.500" r="4.300" fill="#484848"/>
 <path d="M259.600 15.500h4.800M262 13.100v4.800" stroke-width="1.300"/>
 <!-- open folder -->
 <path d="M272.500 16.500v-12h5.500l1.500 2h6v2" />
 <path d="M272.500 16.500l3-8h15l-3 8z" fill="#bcbcbc"/>
 <path d="M284 4.500c1.500-2 4-2.500 6-1.500M290 3l.500-2M290 3l-2.300.3" stroke-width="1.200"/>
 <!-- export (disabled) -->
 <g stroke="#6e6e6e">
  <path d="M297 16.500l3-7h3M309 9.500h3l3 7zM297 16.500h18v-2"/>
  <path d="M306 2v9M303 8l3 3.500l3-3.500" />
 </g>
 <path d="M321.500 7.500l3 3l3-3" stroke-width="1.200"/>
 <path d="M335.500 1v19" stroke="#5c5c5c" stroke-width="1"/>
 <!-- undo/redo disabled -->
 <g stroke="#6a6a6a" stroke-width="1.500">
  <path d="M348 16h7c3 0 5-2 5-4.500s-2-4.500-5-4.500h-8M350 3.500l-3.500 3.500l3.500 3.500"/>
  <path d="M382 16h-7c-3 0-5-2-5-4.500s2-4.500 5-4.500h8M380 3.500l3.500 3.500l-3.500 3.500"/>
 </g>
 <path d="M392.500 1v19" stroke="#5c5c5c" stroke-width="1"/>
 <!-- spinner -->
 <g stroke="#cdcdcd" stroke-width="1.600" stroke-linecap="butt">
  <circle cx="409" cy="9.500" r="7" stroke-width="3.200" stroke-dasharray="1.500 2.170"/>
 </g>
 <!-- dotted selection (disabled) -->
 <g stroke="#6a6a6a" stroke-width="1.100" stroke-dasharray="1.500 1.500">
  <rect x="425.500" y="2.500" width="12" height="12"/>
  <rect x="430.500" y="7" width="11" height="10"/>
 </g>
 <!-- bucket -->
 <path d="M459 1.500l8.500 8l-8.500 8l-8.500-8z" fill="none" stroke="#e0e0e0" stroke-width="1.300"/>
 <path d="M453 7.500h12l2.500 2l-8.500 8l-8.500-8z" fill="#e6e6e6" stroke="none"/>
 <path d="M450 11.500c-1.500 2-1.500 4 0 4c1.500 0 1.500-2 0-4z" fill="#e6e6e6" stroke="none"/>
 <path d="M456.500 4v-2.500c0-2.500 4-2.500 4 0" stroke="#e0e0e0" stroke-width="1.100"/>
 <!-- transform -->
 <rect x="476" y="4" width="13" height="12" stroke-width="1.300"/>
 <g fill="#bcbcbc" stroke="none"><rect x="474.500" y="2.500" width="3" height="3"/><rect x="487.500" y="2.500" width="3" height="3"/><rect x="474.500" y="14.500" width="3" height="3"/><rect x="487.500" y="14.500" width="3" height="3"/><rect x="481" y="0" width="3" height="3"/><rect x="481" y="14.500" width="3" height="3"/></g>
 <path d="M482.500 2v2"/>
 <path d="M499.500 1v19" stroke="#5c5c5c" stroke-width="1"/>
 <!-- disabled triangles -->
 <g stroke="#6a6a6a" stroke-width="1.100" stroke-dasharray="1.600 1.600">
  <rect x="507" y="2.500" width="15" height="14"/><path d="M507 2.500l15 14"/>
  <rect x="531" y="2.500" width="16" height="14"/>
  <rect x="556.500" y="2.500" width="15" height="14"/><rect x="559" y="5" width="10" height="9" stroke-dasharray="none"/>
 </g>
 <path d="M533 16.500l14-12v12z" fill="#777" stroke="none"/>
</g>
<!-- highlighted tool buttons -->
<rect x="584.500" y="0" width="50" height="21" fill="#69789c"/>
<g fill="none" stroke="#d5dcee" stroke-width="1.400" stroke-linecap="round" stroke-linejoin="round">
 <path d="M590 4v13h13M606 1l-15 15M591 10v6h6" />
 <path d="M614 9c0 5 4 8 10 8h7M632 0l-9 12M614 9l4 0" />
 <path d="M623 12c-2 1-3 3-3 4" stroke-width="1.100"/>
</g>
<g fill="none" stroke="#bcbcbc" stroke-width="1.400" stroke-linecap="round" stroke-linejoin="round">
 <path d="M655 0l-9 9l-1.500 3.500l3.500-1.500M640 12h15M643 12v5M640 17h15" />
 <path d="M662.500 1v19M695.500 1v19" stroke="#5c5c5c" stroke-width="1"/>
 <!-- phone -->
 <rect x="672.500" y="-1" width="12.500" height="19.500" rx="1.500"/>
 <path d="M672.500 15.500h12.500v2.500h-12.500z" fill="#bcbcbc"/>
 <g fill="#bcbcbc" stroke="none"><rect x="675" y="2" width="2" height="2"/><rect x="678" y="2" width="2" height="2"/><rect x="681" y="2" width="2" height="2"/><rect x="675" y="5.500" width="2" height="2"/><rect x="678" y="5.500" width="2" height="2"/><rect x="675" y="9" width="2" height="2"/></g>
 <!-- help -->
 <path d="M711 3.500a6.800 6.800 0 1 1-4.500 12l-3.500 1.500l1.200-3.500a6.800 6.800 0 0 1 6.800-10z"/>
 <path d="M708.800 8c0-3 4.600-3 4.600-.3c0 1.800-2.300 1.800-2.300 3.800M711.100 13.800v.3" stroke-width="1.500"/>
 <path d="M716 3l3-2.500M719 .5l-2.500 0M719 .5l0 2.500" stroke-width="1.100"/>
 <!-- gear -->
 <circle cx="736.500" cy="10" r="5.800"/>
 <circle cx="736.500" cy="10" r="8" stroke-width="2.600" stroke-dasharray="2.100 4.180" stroke-linecap="butt"/>
 <path d="M736.500 10v-5.500M736.500 10l4.800 3M736.500 10l-4.800 3" stroke-width="1.200"/>
 <path d="M746.500 13.500v5h-5z" fill="#bcbcbc" stroke="#484848" stroke-width="1"/>
 <!-- tab row chevron -->
 <path d="M850.500 30l2.500 2.800l2.500-2.800" stroke="#bbb" stroke-width="1.200"/>
</g>
<!-- tab close x -->
<path d="M285.500 28.500l7 7M292.500 28.500l-7 7" stroke="#dfe4f0" stroke-width="1.100" fill="none"/>

<!-- v scrollbar buttons -->
<rect x="847" y="43" width="12" height="13" fill="#555"/>
<path d="M850.500 51l2.500-3l2.500 3" stroke="#bbb" stroke-width="1.100" fill="none"/>
<rect x="847" y="590" width="12" height="13" fill="#555"/>
<path d="M850.500 595l2.500 3l2.500-3" stroke="#bbb" stroke-width="1.100" fill="none"/>
<!-- small cursor -->
<circle cx="828" cy="307" r="2.200" fill="none" stroke="#d0d0d0" stroke-width=".9"/>

<!-- ===== bottom bar ===== -->
<g fill="#3a3a3a" stroke="#6a6a6a" stroke-width="1">
 <rect x="148.500" y="604.500" width="51" height="12"/>
 <rect x="203.500" y="604.500" width="46" height="12"/>
 <rect x="313.500" y="604.500" width="47" height="12"/>
 <rect x="364.500" y="604.500" width="47" height="12"/>
</g>
<path d="M204 616l45-7v7z" fill="#4a4a4a"/>
<path d="M172 616l27-8v8z" fill="#4a4a4a"/>
<path d="M336 616l24-7v7z" fill="#4a4a4a"/>
<path d="M365 616l46-6v6z" fill="#4a4a4a"/>
<g fill="none" stroke="#9a9a9a" stroke-width="1.300" stroke-linecap="round">
 <path d="M256.500 610.500h7M276.500 610.500h7M280 607v7"/>
 <rect x="297" y="607" width="6" height="6" fill="#9a9a9a" stroke="none"/>
 <path d="M421 613a4 4 0 1 1 6 -.500M419.500 609.500l1.200 3.500l3.300-1.500" stroke-width="1.100"/>
 <path d="M447 613a4 4 0 1 0-6 -.500M448.500 609.500l-1.200 3.500l-3.300-1.500" stroke-width="1.100"/>
 <circle cx="464.500" cy="610.500" r="4.300" stroke-width="1.100"/><path d="M464.500 610.500v-5" stroke-width="1.100"/><circle cx="464.500" cy="610.500" r="1.200" fill="#9a9a9a" stroke="none"/>
</g>
<rect x="475" y="604" width="11" height="13" fill="#555"/>
<path d="M482 608l-2.500 2.500l2.500 2.500" stroke="#aaa" stroke-width="1.100" fill="none"/>
<rect x="486" y="604" width="349" height="13" fill="#3d3d3d"/>
<rect x="586" y="605" width="159" height="11" rx="5.500" fill="#5a5a5a"/>
<rect x="835" y="604" width="12" height="13" fill="#555"/>
<path d="M839.500 608l2.500 2.500l-2.500 2.500" stroke="#bbb" stroke-width="1.100" fill="none"/>
<path d="M153.500 623.500l3.500-3l3.500 3M153.500 626.500l3.500-3l3.500 3" stroke="#777" stroke-width="1" fill="none"/>

<!-- ===== left bottom controls ===== -->
<g fill="none" stroke="#cdcdcd" stroke-width="1.200" stroke-linecap="round" stroke-linejoin="round">
 <circle cx="57.500" cy="601" r="7"/><path d="M53.500 601h8"/>
 <circle cx="76.500" cy="601" r="7"/><path d="M72.500 601h8M76.500 597v8"/>
 <circle cx="95.500" cy="601" r="7"/><rect x="92" y="597.500" width="7" height="7" rx="1" fill="#cdcdcd" stroke="none"/>
 <path d="M108.500 593v30" stroke="#3a3a3a" stroke-width="1"/>
 <rect x="111" y="594.500" width="6.500" height="6.500" rx="1"/><rect x="117.500" y="601" width="6.500" height="6.500" rx="1"/><path d="M115 598.500l5 5M120 603.500v-2.500M120 603.500h-2.500" />
 <rect x="130.500" y="594.500" width="12.500" height="12.500" rx="1"/><path d="M133.500 597.500l6.500 6.500M133.500 597.500h3M133.500 597.500v3M140 604h-3M140 604v-3"/>
 <path d="M62 617a6.500 6.500 0 1 0 -7.500 8" /><path d="M51 617.500l3.500 4l2-4.500z" fill="#cdcdcd" stroke="none"/>
 <path d="M72 617a6.500 6.500 0 1 1 7.500 8" /><path d="M83 617.500l-3.500 4l-2-4.500z" fill="#cdcdcd" stroke="none"/>
 <circle cx="95.500" cy="620" r="6.800" stroke-dasharray="2 1.500"/><path d="M95.500 620v-7"/><circle cx="95.500" cy="620.500" r="1.600" fill="#cdcdcd" stroke="none"/>
 <path d="M111 614v12l5.500-6zM124.500 614v12l-5.500-6z"/><path d="M124.500 614v12l-5.500-6z" fill="#cdcdcd"/><path d="M117.800 612v14" stroke-width="1"/>
 <path d="M131.500 613.500h11l-5.500 5z" fill="#cdcdcd"/><path d="M130 620.500h14" stroke-width="1"/><path d="M131.500 627h11l-5.500-5z"/>
</g>
</svg>
<div class="t" style="left:150px;top:603px;font-size:13px;line-height:15px;color:#dadada">60.5</div>
<div class="t" style="left:316px;top:603px;font-size:13px;line-height:15px;color:#dadada">0.0</div>

<div class="a" style="left:875px;top:19px;width:125px;height:16px;background:#3e3e3e"></div>
<div class="a" style="left:893px;top:19px;width:29px;height:16px;background:#4a4a4a"></div>
<div class="a" style="left:924px;top:20px;width:29px;height:14px;background:#464646"></div>
<div class="a" style="left:955px;top:20px;width:29px;height:14px;background:#464646"></div>
<div class="a" style="left:986px;top:20px;width:14px;height:14px;background:#464646"></div>
<div class="a" style="left:875px;top:35px;width:125px;height:188px;background:#4a4a4a;overflow:hidden">
<div class="a" style="left:5px;top:4.5px;width:166px;height:166px;border-radius:50%;background:conic-gradient(from 0deg,#ffef00 0deg,#9cf000 30deg,#1ee81e 60deg,#00e8a0 95deg,#00d8f0 120deg,#0a7cff 150deg,#1420ff 180deg,#6a20ff 205deg,#c428fa 225deg,#f516f0 242deg,#ff0a90 272deg,#f0102a 300deg,#ff6a00 330deg,#ffef00 360deg)"></div>
<div class="a" style="left:18.700px;top:18.200px;width:138.600px;height:138.600px;border-radius:50%;background:#4a4a4a"></div>
<div class="a" style="left:44px;top:45px;width:87px;height:87px;background:linear-gradient(to top,#000 0%,rgba(0,0,0,0) 100%),linear-gradient(to right,#fff 0%,#ff1a00 100%)"></div>
</div>
<div class="a" style="left:875px;top:223px;width:125px;height:3px;background:#333"></div>
<div class="a" style="left:875px;top:226px;width:125px;height:21px;background:#3e3e3e"></div>
<div class="a" style="left:893px;top:226px;width:88px;height:20px;background:#4c4c4c"></div>
<div class="a" style="left:875px;top:244px;width:125px;height:96px;background:#4a4a4a"></div>
<div class="t" style="left:922.500px;top:230px;font-size:10.500px;line-height:13px;transform:scaleX(.905)">Color History</div>
<div class="a" style="left:875px;top:247.500px;width:125px;height:79px;background:#5a5a5a;overflow:hidden">
<div class="a" style="left:0.9px;top:0.6px;width:9.400px;height:8.800px;background:#050505"></div>
<div class="a" style="left:11.1px;top:0.6px;width:9.400px;height:8.800px;background:#c8371f"></div>
<div class="a" style="left:21.3px;top:0.6px;width:9.400px;height:8.800px;background:#d3902a"></div>
<div class="a" style="left:31.5px;top:0.6px;width:9.400px;height:8.800px;background:#2f7f80"></div>
<div class="a" style="left:41.7px;top:0.6px;width:9.400px;height:8.800px;background:#d18f2d"></div>
<div class="a" style="left:51.9px;top:0.6px;width:9.400px;height:8.800px;background:#3a1a2e"></div>
<div class="a" style="left:62.1px;top:0.6px;width:9.400px;height:8.800px;background:#f0cd85"></div>
<div class="a" style="left:72.3px;top:0.6px;width:9.400px;height:8.800px;background:#c8962a"></div>
<div class="a" style="left:82.5px;top:0.6px;width:9.400px;height:8.800px;background:#c0683a"></div>
<div class="a" style="left:92.7px;top:0.6px;width:9.400px;height:8.800px;background:#98946a"></div>
<div class="a" style="left:102.9px;top:0.6px;width:9.400px;height:8.800px;background:#98946a"></div>
<div class="a" style="left:113.1px;top:0.6px;width:9.400px;height:8.800px;background:#5f5a35"></div>
<div class="a" style="left:123.3px;top:0.6px;width:9.400px;height:8.800px;background:#b5cf98"></div>
<div class="a" style="left:0.9px;top:10.2px;width:9.400px;height:8.800px;background:#dca468"></div>
<div class="a" style="left:11.1px;top:10.2px;width:9.400px;height:8.800px;background:#dfa96e"></div>
<div class="a" style="left:21.3px;top:10.2px;width:9.400px;height:8.800px;background:#e80c0c"></div>
<div class="a" style="left:31.5px;top:10.2px;width:9.400px;height:8.800px;background:#dccfc8"></div>
<div class="a" style="left:41.7px;top:10.2px;width:9.400px;height:8.800px;background:#0f6b68"></div>
<div class="a" style="left:51.9px;top:10.2px;width:9.400px;height:8.800px;background:#1f8578"></div>
<div class="a" style="left:62.1px;top:10.2px;width:9.400px;height:8.800px;background:#1f7d9a"></div>
<div class="a" style="left:72.3px;top:10.2px;width:9.400px;height:8.800px;background:#3a94c0"></div>
<div class="a" style="left:82.5px;top:10.2px;width:9.400px;height:8.800px;background:#4aa2d4"></div>
<div class="a" style="left:92.7px;top:10.2px;width:9.400px;height:8.800px;background:#d9a05f"></div>
<div class="a" style="left:102.9px;top:10.2px;width:9.400px;height:8.800px;background:#1a5a70"></div>
<div class="a" style="left:113.1px;top:10.2px;width:9.400px;height:8.800px;background:#1f7a3e"></div>
<div class="a" style="left:123.3px;top:10.2px;width:9.400px;height:8.800px;background:#6a6030"></div>
<div class="a" style="left:0.9px;top:19.8px;width:9.400px;height:8.800px;background:#0f78b4"></div>
<div class="a" style="left:11.1px;top:19.8px;width:9.400px;height:8.800px;background:#d5d2de"></div>
<div class="a" style="left:21.3px;top:19.8px;width:9.400px;height:8.800px;background:#0a14f0"></div>
<div class="a" style="left:31.5px;top:19.8px;width:9.400px;height:8.800px;background:#ff6a00"></div>
<div class="a" style="left:41.7px;top:19.8px;width:9.400px;height:8.800px;background:#ff1420"></div>
<div class="a" style="left:51.9px;top:19.8px;width:9.400px;height:8.800px;background:#140800"></div>
<div class="a" style="left:62.1px;top:19.8px;width:9.400px;height:8.800px;background:#0c1404"></div>
<div class="a" style="left:72.3px;top:19.8px;width:9.400px;height:8.800px;background:#0c1a06"></div>
<div class="a" style="left:82.5px;top:19.8px;width:9.400px;height:8.800px;background:#0a1c08"></div>
<div class="a" style="left:92.7px;top:19.8px;width:9.400px;height:8.800px;background:#b5406e"></div>
<div class="a" style="left:102.9px;top:19.8px;width:9.400px;height:8.800px;background:#15110f"></div>
<div class="a" style="left:113.1px;top:19.8px;width:9.400px;height:8.800px;background:#1c1a1c"></div>
<div class="a" style="left:123.3px;top:19.8px;width:9.400px;height:8.800px;background:#2a2830"></div>
<div class="a" style="left:0.9px;top:29.5px;width:9.400px;height:8.800px;background:#a8204a"></div>
<div class="a" style="left:11.1px;top:29.5px;width:9.400px;height:8.800px;background:#a82a5a"></div>
<div class="a" style="left:21.3px;top:29.5px;width:9.400px;height:8.800px;background:#a32452"></div>
<div class="a" style="left:31.5px;top:29.5px;width:9.400px;height:8.800px;background:#8c1a40"></div>
<div class="a" style="left:41.7px;top:29.5px;width:9.400px;height:8.800px;background:#a02a5a"></div>
<div class="a" style="left:51.9px;top:29.5px;width:9.400px;height:8.800px;background:#8f2a58"></div>
<div class="a" style="left:62.1px;top:29.5px;width:9.400px;height:8.800px;background:#9a2f62"></div>
<div class="a" style="left:72.3px;top:29.5px;width:9.400px;height:8.800px;background:#cf4d7e"></div>
<div class="a" style="left:82.5px;top:29.5px;width:9.400px;height:8.800px;background:#ee5a8c"></div>
<div class="a" style="left:92.7px;top:29.5px;width:9.400px;height:8.800px;background:#f2d070"></div>
<div class="a" style="left:102.9px;top:29.5px;width:9.400px;height:8.800px;background:#e8c455"></div>
<div class="a" style="left:113.1px;top:29.5px;width:9.400px;height:8.800px;background:#cfae4a"></div>
<div class="a" style="left:123.3px;top:29.5px;width:9.400px;height:8.800px;background:#caa850"></div>
<div class="a" style="left:0.9px;top:39.1px;width:9.400px;height:8.800px;background:#a04a72"></div>
<div class="a" style="left:11.1px;top:39.1px;width:9.400px;height:8.800px;background:#c9a0b0"></div>
<div class="a" style="left:21.3px;top:39.1px;width:9.400px;height:8.800px;background:#d4b06a"></div>
<div class="a" style="left:31.5px;top:39.1px;width:9.400px;height:8.800px;background:#e0b882"></div>
<div class="a" style="left:41.7px;top:39.1px;width:9.400px;height:8.800px;background:#1c1420"></div>
<div class="a" style="left:51.9px;top:39.1px;width:9.400px;height:8.800px;background:#e6e0f0"></div>
<div class="a" style="left:62.1px;top:39.1px;width:9.400px;height:8.800px;background:#a090b0"></div>
<div class="a" style="left:72.3px;top:39.1px;width:9.400px;height:8.800px;background:#e0b080"></div>
<div class="a" style="left:82.5px;top:39.1px;width:9.400px;height:8.800px;background:#d8a870"></div>
<div class="a" style="left:92.7px;top:39.1px;width:9.400px;height:8.800px;background:#9a90a8"></div>
<div class="a" style="left:102.9px;top:39.1px;width:9.400px;height:8.800px;background:#2f7a30"></div>
<div class="a" style="left:113.1px;top:39.1px;width:9.400px;height:8.800px;background:#d9a672"></div>
<div class="a" style="left:123.3px;top:39.1px;width:9.400px;height:8.800px;background:#8060b0"></div>
<div class="a" style="left:0.9px;top:48.7px;width:9.400px;height:8.800px;background:#9a5cb0"></div>
<div class="a" style="left:11.1px;top:48.7px;width:9.400px;height:8.800px;background:#d8a06c"></div>
<div class="a" style="left:21.3px;top:48.7px;width:9.400px;height:8.800px;background:#222222"></div>
<div class="a" style="left:31.5px;top:48.7px;width:9.400px;height:8.800px;background:#4c306a"></div>
<div class="a" style="left:41.7px;top:48.7px;width:9.400px;height:8.800px;background:#9a9a9a"></div>
<div class="a" style="left:51.9px;top:48.7px;width:9.400px;height:8.800px;background:#c8c4cc"></div>
<div class="a" style="left:62.1px;top:48.7px;width:9.400px;height:8.800px;background:#9a60b0"></div>
<div class="a" style="left:72.3px;top:48.7px;width:9.400px;height:8.800px;background:#3a2848"></div>
<div class="a" style="left:82.5px;top:48.7px;width:9.400px;height:8.800px;background:#080808"></div>
<div class="a" style="left:92.7px;top:48.7px;width:9.400px;height:8.800px;background:#d8a470"></div>
<div class="a" style="left:102.9px;top:48.7px;width:9.400px;height:8.800px;background:#050505"></div>
<div class="a" style="left:113.1px;top:48.7px;width:9.400px;height:8.800px;background:#a060c0"></div>
<div class="a" style="left:123.3px;top:48.7px;width:9.400px;height:8.800px;background:#3a2850"></div>
<div class="a" style="left:0.9px;top:58.3px;width:9.400px;height:8.800px;background:#9660a8"></div>
<div class="a" style="left:11.1px;top:58.3px;width:9.400px;height:8.800px;background:#48286a"></div>
<div class="a" style="left:21.3px;top:58.3px;width:9.400px;height:8.800px;background:#5c3a80"></div>
<div class="a" style="left:31.5px;top:58.3px;width:9.400px;height:8.800px;background:#9a5cb0"></div>
<div class="a" style="left:41.7px;top:58.3px;width:9.400px;height:8.800px;background:#70408a"></div>
<div class="a" style="left:51.9px;top:58.3px;width:9.400px;height:8.800px;background:#9060aa"></div>
<div class="a" style="left:62.1px;top:58.3px;width:9.400px;height:8.800px;background:#9a64b4"></div>
<div class="a" style="left:72.3px;top:58.3px;width:9.400px;height:8.800px;background:#b06cd0"></div>
<div class="a" style="left:82.5px;top:58.3px;width:9.400px;height:8.800px;background:#a07050"></div>
<div class="a" style="left:92.7px;top:58.3px;width:9.400px;height:8.800px;background:#d8a06c"></div>
<div class="a" style="left:102.9px;top:58.3px;width:9.400px;height:8.800px;background:#c89868"></div>
<div class="a" style="left:113.1px;top:58.3px;width:9.400px;height:8.800px;background:#d8a878"></div>
<div class="a" style="left:123.3px;top:58.3px;width:9.400px;height:8.800px;background:#d8a070"></div>
<div class="a" style="left:0.9px;top:67.9px;width:9.400px;height:8.800px;background:#dcd6e8"></div>
<div class="a" style="left:11.1px;top:67.9px;width:9.400px;height:8.800px;background:#a898b8"></div>
<div class="a" style="left:21.3px;top:67.9px;width:9.400px;height:8.800px;background:#b8a8c8"></div>
<div class="a" style="left:31.5px;top:67.9px;width:9.400px;height:8.800px;background:#a898b4"></div>
<div class="a" style="left:41.7px;top:67.9px;width:9.400px;height:8.800px;background:#32284a"></div>
<div class="a" style="left:51.9px;top:67.9px;width:9.400px;height:8.800px;background:#8a78a0"></div>
<div class="a" style="left:62.1px;top:67.9px;width:9.400px;height:8.800px;background:#8a70a8"></div>
<div class="a" style="left:72.3px;top:67.9px;width:9.400px;height:8.800px;background:#1e1830"></div>
<div class="a" style="left:82.5px;top:67.9px;width:9.400px;height:8.800px;background:#4c3880"></div>
<div class="a" style="left:92.7px;top:67.9px;width:9.400px;height:8.800px;background:#4a3478"></div>
<div class="a" style="left:102.9px;top:67.9px;width:9.400px;height:8.800px;background:#503a80"></div>
<div class="a" style="left:113.1px;top:67.9px;width:9.400px;height:8.800px;background:#523a84"></div>
<div class="a" style="left:123.3px;top:67.9px;width:9.400px;height:8.800px;background:#4c3480"></div>
<div class="a" style="left:0.9px;top:77.6px;width:9.400px;height:8.800px;background:#f0f0f0"></div>
<div class="a" style="left:11.1px;top:77.6px;width:9.400px;height:8.800px;background:#3a3050"></div>
<div class="a" style="left:21.3px;top:77.6px;width:9.400px;height:8.800px;background:#2a2440"></div>
<div class="a" style="left:31.5px;top:77.6px;width:9.400px;height:8.800px;background:#2a2440"></div>
<div class="a" style="left:41.7px;top:77.6px;width:9.400px;height:8.800px;background:#2a2036"></div>
<div class="a" style="left:51.9px;top:77.6px;width:9.400px;height:8.800px;background:#3a3050"></div>
<div class="a" style="left:62.1px;top:77.6px;width:9.400px;height:8.800px;background:#3a3050"></div>
<div class="a" style="left:72.3px;top:77.6px;width:9.400px;height:8.800px;background:#2a2440"></div>
<div class="a" style="left:82.5px;top:77.6px;width:9.400px;height:8.800px;background:#3a2c60"></div>
<div class="a" style="left:92.7px;top:77.6px;width:9.400px;height:8.800px;background:#3a2c60"></div>
<div class="a" style="left:102.9px;top:77.6px;width:9.400px;height:8.800px;background:#3a2c60"></div>
<div class="a" style="left:113.1px;top:77.6px;width:9.400px;height:8.800px;background:#3a2c60"></div>
<div class="a" style="left:123.3px;top:77.6px;width:9.400px;height:8.800px;background:#3a2c60"></div>
</div>
<div class="a" style="left:874.5px;top:329.500px;width:8.500px;height:7.500px;background:#cc0000;border:1px solid #6a6a6a"></div>
<div class="a" style="left:907.5px;top:329.500px;width:8.500px;height:7.500px;background:#00c000;border:1px solid #6a6a6a"></div>
<div class="a" style="left:940.5px;top:329.500px;width:8.500px;height:7.500px;background:#0000dd;border:1px solid #6a6a6a"></div>
<div class="a" style="left:875px;top:340px;width:125px;height:3px;background:#333"></div>
<div class="a" style="left:875px;top:343px;width:125px;height:20px;background:#3e3e3e"></div>
<div class="a" style="left:893px;top:343px;width:69px;height:16px;background:#4c4c4c"></div>
<div class="a" style="left:875px;top:358px;width:125px;height:5px;background:#4c4c4c"></div>
<div class="t" style="left:922.500px;top:346.500px;font-size:10.500px;line-height:13px;transform:scaleX(.87)">Sub Tool</div>
<div class="a" style="left:875px;top:363px;width:125px;height:96px;background:#333"></div>
<div class="a" style="left:876px;top:365px;width:124px;height:24px;background:#6b7a9f"></div>
<div class="t" style="left:902.500px;top:369.500px;font-size:12.500px;line-height:15px;color:#eef0f6;transform:scaleX(.97)">Eraser</div>
<div class="a" style="left:876px;top:391px;width:124px;height:24px;background:#424242"></div>
<div class="a" style="left:876px;top:416.500px;width:124px;height:23.500px;background:#6b7a9f"></div>
<div class="a" style="left:876px;top:441.500px;width:124px;height:17px;background:#424242;overflow:hidden"><div class="t" style="left:72px;top:9.500px;font-size:12.500px;line-height:15px">Kneaded</div></div>
<div class="a" style="left:876px;top:458.500px;width:124px;height:19.500px;background:#4c4c4c"></div>
<div class="a" style="left:875px;top:478px;width:125px;height:3px;background:#333"></div>
<div class="a" style="left:875px;top:481px;width:125px;height:22px;background:#3e3e3e"></div>
<div class="a" style="left:893px;top:481.500px;width:30px;height:15.500px;background:#444;border:1px solid #555;border-bottom:none"></div>
<div class="a" style="left:924px;top:481px;width:75px;height:17px;background:#4c4c4c"></div>
<div class="a" style="left:875px;top:497px;width:125px;height:6px;background:#4c4c4c"></div>
<div class="t" style="left:953.500px;top:485.500px;font-size:10.500px;line-height:13px;transform:scaleX(.83)">Brush Size</div>
<div class="a" style="left:875px;top:503px;width:125px;height:123px;background:#2c2c2c"></div>
<div class="a" style="left:876px;top:504px;width:31.5px;height:39.5px;background:#424242"></div>
<div class="a" style="left:891.8px;top:517.5px;width:1.0px;height:1.0px;border-radius:50%;background:#888"></div>
<div class="t" style="left:892.2px;top:527.5px;width:40px;margin-left:-20px;text-align:center;font-size:12.500px;line-height:15px;color:#dadada">0.7</div>
<div class="a" style="left:908.5px;top:504px;width:31px;height:39.5px;background:#424242"></div>
<div class="a" style="left:923.9px;top:517.4px;width:1.2px;height:1.2px;border-radius:50%;background:#999"></div>
<div class="t" style="left:924.5px;top:527.5px;width:40px;margin-left:-20px;text-align:center;font-size:12.500px;line-height:15px;color:#dadada">1</div>
<div class="a" style="left:940.5px;top:504px;width:31px;height:39.5px;background:#424242"></div>
<div class="a" style="left:956.0px;top:517.5px;width:1.0px;height:1.0px;border-radius:50%;background:#666"></div>
<div class="t" style="left:956.5px;top:527.5px;width:40px;margin-left:-20px;text-align:center;font-size:12.500px;line-height:15px;color:#dadada">1.5</div>
<div class="a" style="left:972.5px;top:504px;width:28px;height:39.5px;background:#424242"></div>
<div class="a" style="left:987.9px;top:517.4px;width:1.2px;height:1.2px;border-radius:50%;background:#888"></div>
<div class="t" style="left:988.5px;top:527.5px;width:40px;margin-left:-20px;text-align:center;font-size:12.500px;line-height:15px;color:#dadada">2</div>
<div class="a" style="left:876px;top:544.5px;width:31.5px;height:40.5px;background:#424242"></div>
<div class="a" style="left:891.5px;top:558.7px;width:1.6px;height:1.6px;border-radius:50%;background:#ddd"></div>
<div class="t" style="left:892.2px;top:567.5px;width:40px;margin-left:-20px;text-align:center;font-size:12.500px;line-height:15px;color:#dadada">3</div>
<div class="a" style="left:908.5px;top:544.5px;width:31px;height:40.5px;background:#424242"></div>
<div class="a" style="left:923.5px;top:558.5px;width:2.0px;height:2.0px;border-radius:50%;background:#eee"></div>
<div class="t" style="left:924.5px;top:567.5px;width:40px;margin-left:-20px;text-align:center;font-size:12.500px;line-height:15px;color:#dadada">4</div>
<div class="a" style="left:940.5px;top:544.5px;width:31px;height:40.5px;background:#424242"></div>
<div class="a" style="left:955.2px;top:558.2px;width:2.6px;height:2.6px;border-radius:50%;background:#eee"></div>
<div class="t" style="left:956.5px;top:567.5px;width:40px;margin-left:-20px;text-align:center;font-size:12.500px;line-height:15px;color:#dadada">5</div>
<div class="a" style="left:972.5px;top:544.5px;width:28px;height:40.5px;background:#424242"></div>
<div class="a" style="left:987.0px;top:558.0px;width:3.0px;height:3.0px;border-radius:50%;background:#fff"></div>
<div class="t" style="left:988.5px;top:567.5px;width:40px;margin-left:-20px;text-align:center;font-size:12.500px;line-height:15px;color:#dadada">6</div>
<div class="a" style="left:876px;top:586px;width:31.5px;height:40px;background:#424242"></div>
<div class="a" style="left:890.1px;top:598.4px;width:4.2px;height:4.2px;border-radius:50%;background:#fff"></div>
<div class="t" style="left:892.2px;top:609.5px;width:40px;margin-left:-20px;text-align:center;font-size:12.500px;line-height:15px;color:#dadada">8</div>
<div class="a" style="left:908.5px;top:586px;width:31px;height:40px;background:#424242"></div>
<div class="a" style="left:921.8px;top:597.8px;width:5.4px;height:5.4px;border-radius:50%;background:#fff"></div>
<div class="t" style="left:924.5px;top:609.5px;width:40px;margin-left:-20px;text-align:center;font-size:12.500px;line-height:15px;color:#dadada">10</div>
<div class="a" style="left:940.5px;top:586px;width:31px;height:40px;background:#5f6e94"></div>
<div class="a" style="left:953.3px;top:597.3px;width:6.4px;height:6.4px;border-radius:50%;background:#fff"></div>
<div class="a" style="left:946px;top:608px;width:20px;height:18px;background:#4a5676"></div>
<div class="t" style="left:956.5px;top:609.5px;width:40px;margin-left:-20px;text-align:center;font-size:12.500px;line-height:15px;color:#dadada">12</div>
<div class="a" style="left:972.5px;top:586px;width:28px;height:40px;background:#424242"></div>
<div class="a" style="left:984.3px;top:596.3px;width:8.4px;height:8.4px;border-radius:50%;background:#fff"></div>
<div class="t" style="left:988.5px;top:609.5px;width:40px;margin-left:-20px;text-align:center;font-size:12.500px;line-height:15px;color:#dadada">15</div>
<div class="a" style="left:926px;top:209.500px;width:8.500px;height:8.500px;background:#c4c4c4;border-radius:1px"></div>
<div class="t" style="left:926px;top:208.500px;width:8.500px;text-align:center;font-size:7.500px;line-height:10px;font-weight:bold;color:#3a3a3a">H</div>
<div class="a" style="left:958.5px;top:209.500px;width:8.500px;height:8.500px;background:#c4c4c4;border-radius:1px"></div>
<div class="t" style="left:958.5px;top:208.500px;width:8.500px;text-align:center;font-size:7.500px;line-height:10px;font-weight:bold;color:#3a3a3a">S</div>
<div class="a" style="left:991px;top:209.500px;width:8.500px;height:8.500px;background:#c4c4c4;border-radius:1px"></div>
<div class="t" style="left:991px;top:208.500px;width:8.500px;text-align:center;font-size:7.500px;line-height:10px;font-weight:bold;color:#3a3a3a">V</div>
<div class="t" style="left:946.500px;top:206.500px;font-size:12.500px;line-height:15px;transform:scaleX(.95)">6</div>
<div class="t" style="left:979px;top:206.500px;font-size:12.500px;line-height:15px;transform:scaleX(.95)">0</div>
<div class="a" style="left:886px;top:189px;width:19.500px;height:19px;background:#3a1825;border:1.500px solid #5c5358;border-radius:3px"></div>
<div class="a" style="left:875px;top:180px;width:20px;height:20px;background:#040404;border:3px solid #8c9dcc;border-radius:4px"></div>
<div class="a" style="left:875.500px;top:210px;width:29.500px;height:10.500px;border:1px solid #6e6e6e;border-radius:5px"></div>
<div class="a" style="left:878.500px;top:213px;width:23.500px;height:4.500px;border-radius:2px;background:repeating-linear-gradient(90deg,#fff 0,#fff 3px,#ddd 3px,#ddd 6px)"></div>
<div class="a" style="left:878.500px;top:215px;width:23.500px;height:2.500px;border-radius:0 0 2px 2px;background:repeating-linear-gradient(90deg,#222 0,#222 3px,#fff 3px,#fff 6px)"></div>
<svg width="1000" height="626" viewBox="0 0 1000 626">
<g fill="none" stroke="#8a8a8a" stroke-width="1.200" stroke-linecap="round" stroke-linejoin="round">
<path d="M880 23h7.500M880 26h7.500M880 29h7.500"/>
<path d="M880 230.500h7.500M880 234h7.500M880 237.500h7.500"/>
<path d="M880 347.500h7.500M880 351h7.500M880 354.500h7.500"/>
<path d="M880 485.500h7.500M880 489h7.500M880 492.500h7.500"/>
</g>
<!-- wheel tab icons -->
<circle cx="907.500" cy="29.500" r="6.800" fill="none" stroke="#d8d8d8" stroke-width="1.400"/>
<rect x="904.500" y="26.500" width="6" height="6" rx="1" fill="#cfcfcf"/>
<g fill="#777" stroke="#6e6e6e" stroke-width="1"><rect x="931.500" y="23.500" width="14" height="9.500" fill="#5a5a5a"/><rect x="933" y="27" width="5" height="5" fill="#888" stroke="none"/><rect x="939" y="25" width="5" height="3" fill="#888" stroke="none"/>
<rect x="962" y="24" width="15" height="3" rx="1.500" stroke="none"/><rect x="962" y="28.500" width="15" height="3" rx="1.500" stroke="none"/><circle cx="966" cy="25.500" r="2" stroke="none" fill="#8a8a8a"/><circle cx="972" cy="30" r="2" stroke="none" fill="#8a8a8a"/>
<path d="M992 33l6-10.500l6 10.500z" stroke="none"/></g>
<!-- hue marker -->
<g transform="translate(902 77.600) rotate(36.300)"><rect x="-7.500" y="-4.500" width="15" height="9" fill="#fff" stroke="#111" stroke-width="1"/><rect x="-5" y="-2.300" width="10" height="4.600" fill="#e8200a"/></g>
<!-- sv marker -->
<circle cx="918.800" cy="166.300" r="3.300" fill="none" stroke="#111" stroke-width="2.400"/>
<circle cx="918.800" cy="166.300" r="3.300" fill="none" stroke="#f4f4f4" stroke-width="1.100"/>
<!-- film icon -->
<g><rect x="900.500" y="230" width="14.500" height="13.500" rx="1" fill="#d0d0d0"/><rect x="904.500" y="232" width="6.500" height="4" fill="#777"/><rect x="904.500" y="238" width="6.500" height="4" fill="#777"/>
<g fill="#4c4c4c"><rect x="901.800" y="231.500" width="1.600" height="1.800"/><rect x="901.800" y="234.800" width="1.600" height="1.800"/><rect x="901.800" y="238.100" width="1.600" height="1.800"/><rect x="901.800" y="241" width="1.600" height="1.500"/><rect x="912.200" y="231.500" width="1.600" height="1.800"/><rect x="912.200" y="234.800" width="1.600" height="1.800"/><rect x="912.200" y="238.100" width="1.600" height="1.800"/><rect x="912.200" y="241" width="1.600" height="1.500"/></g></g>
<!-- sub tool icon -->
<g stroke="#cfcfcf" fill="none" stroke-linecap="round"><path d="M903 358.500l9.500-10.500" stroke-width="3.200"/><path d="M902 360l1-2" stroke-width="1.400"/><path d="M909 354.500h7M909 357.500h7M909 360.500h7M912.500 354v7" stroke-width="1.100"/></g>
<!-- eraser icon -->
<g transform="translate(888.500 377) rotate(-45)"><rect x="-5" y="-6.500" width="10" height="13" rx="1" fill="#6b7a9f" stroke="#e8e8ea" stroke-width="1.200"/><rect x="-5" y="-6.500" width="10" height="8" rx="1" fill="#d4d4cc"/></g>
<path d="M886 386h10" stroke="#e8e8ea" stroke-width="1.100"/>
<!-- brush strokes -->
<defs><filter id="sb"><feGaussianBlur stdDeviation="1.600"/></filter><filter id="sb2"><feGaussianBlur stdDeviation=".400"/></filter></defs>
<path d="M892 407.500c10-8 22-10.500 36-6.500c14 4.500 22 10 36 6c8-2.500 14-5 24-8c-10 4.200-16 7.500-24 10c-15 4.500-24-.5-37-5.500c-13-4-25-2-35 4z" fill="#fff" filter="url(#sb2)"/>
<path d="M892 432c10-9 22-11.500 36-7c14 4.500 22 10 36 6c8-2.500 14-5 24-8" fill="none" stroke="#fff" stroke-width="5" stroke-linecap="round" filter="url(#sb)" opacity=".95"/>
<defs><linearGradient id="kg" gradientUnits="userSpaceOnUse" x1="896" y1="0" x2="950" y2="0"><stop offset="0" stop-color="#bbb" stop-opacity="0"/><stop offset=".35" stop-color="#ccc" stop-opacity=".7"/><stop offset="1" stop-color="#e4e4e4" stop-opacity="1"/></linearGradient></defs>
<path d="M897 454.500c8-4.500 16-7 26-6.500c10 .5 16 4.500 26 8.500" fill="none" stroke="url(#kg)" stroke-width="2.300" stroke-linecap="round" filter="url(#sb2)"/>
<!-- small icon in box -->
<path d="M999.500 462.500h-5.500c-1.200 0-1.500.5-1.500 1.500v8c0 1 .3 1.500 1.500 1.500h6" fill="none" stroke="#d0d0d0" stroke-width="1.100"/>
<path d="M998.500 463v7M996.500 468.500l2 2" stroke="#d0d0d0" stroke-width="1.100" fill="none"/>
<!-- brush size icons -->
<g stroke="#7a7a7a" stroke-width="1" fill="#7a7a7a"><path d="M901 489.500h14M901 494h14" /><rect x="905" y="488" width="3" height="3" stroke="none"/><rect x="909.500" y="492.500" width="3" height="3" stroke="none"/></g>
<g fill="none" stroke="#d8d8d8" stroke-width="1.200" stroke-linecap="round" stroke-linejoin="round"><circle cx="934.500" cy="492" r="3.500"/><circle cx="942" cy="492" r="5.800"/><path d="M933 492h10M940.500 489.500l2.500 2.500l-2.500 2.500"/></g>
<g stroke="#2c2c2c" stroke-width="1"><path d="M908 504v122M940 504v122M972 504v122M876 544h124M876 585.500h124"/></g>
</svg>
</body></html>
